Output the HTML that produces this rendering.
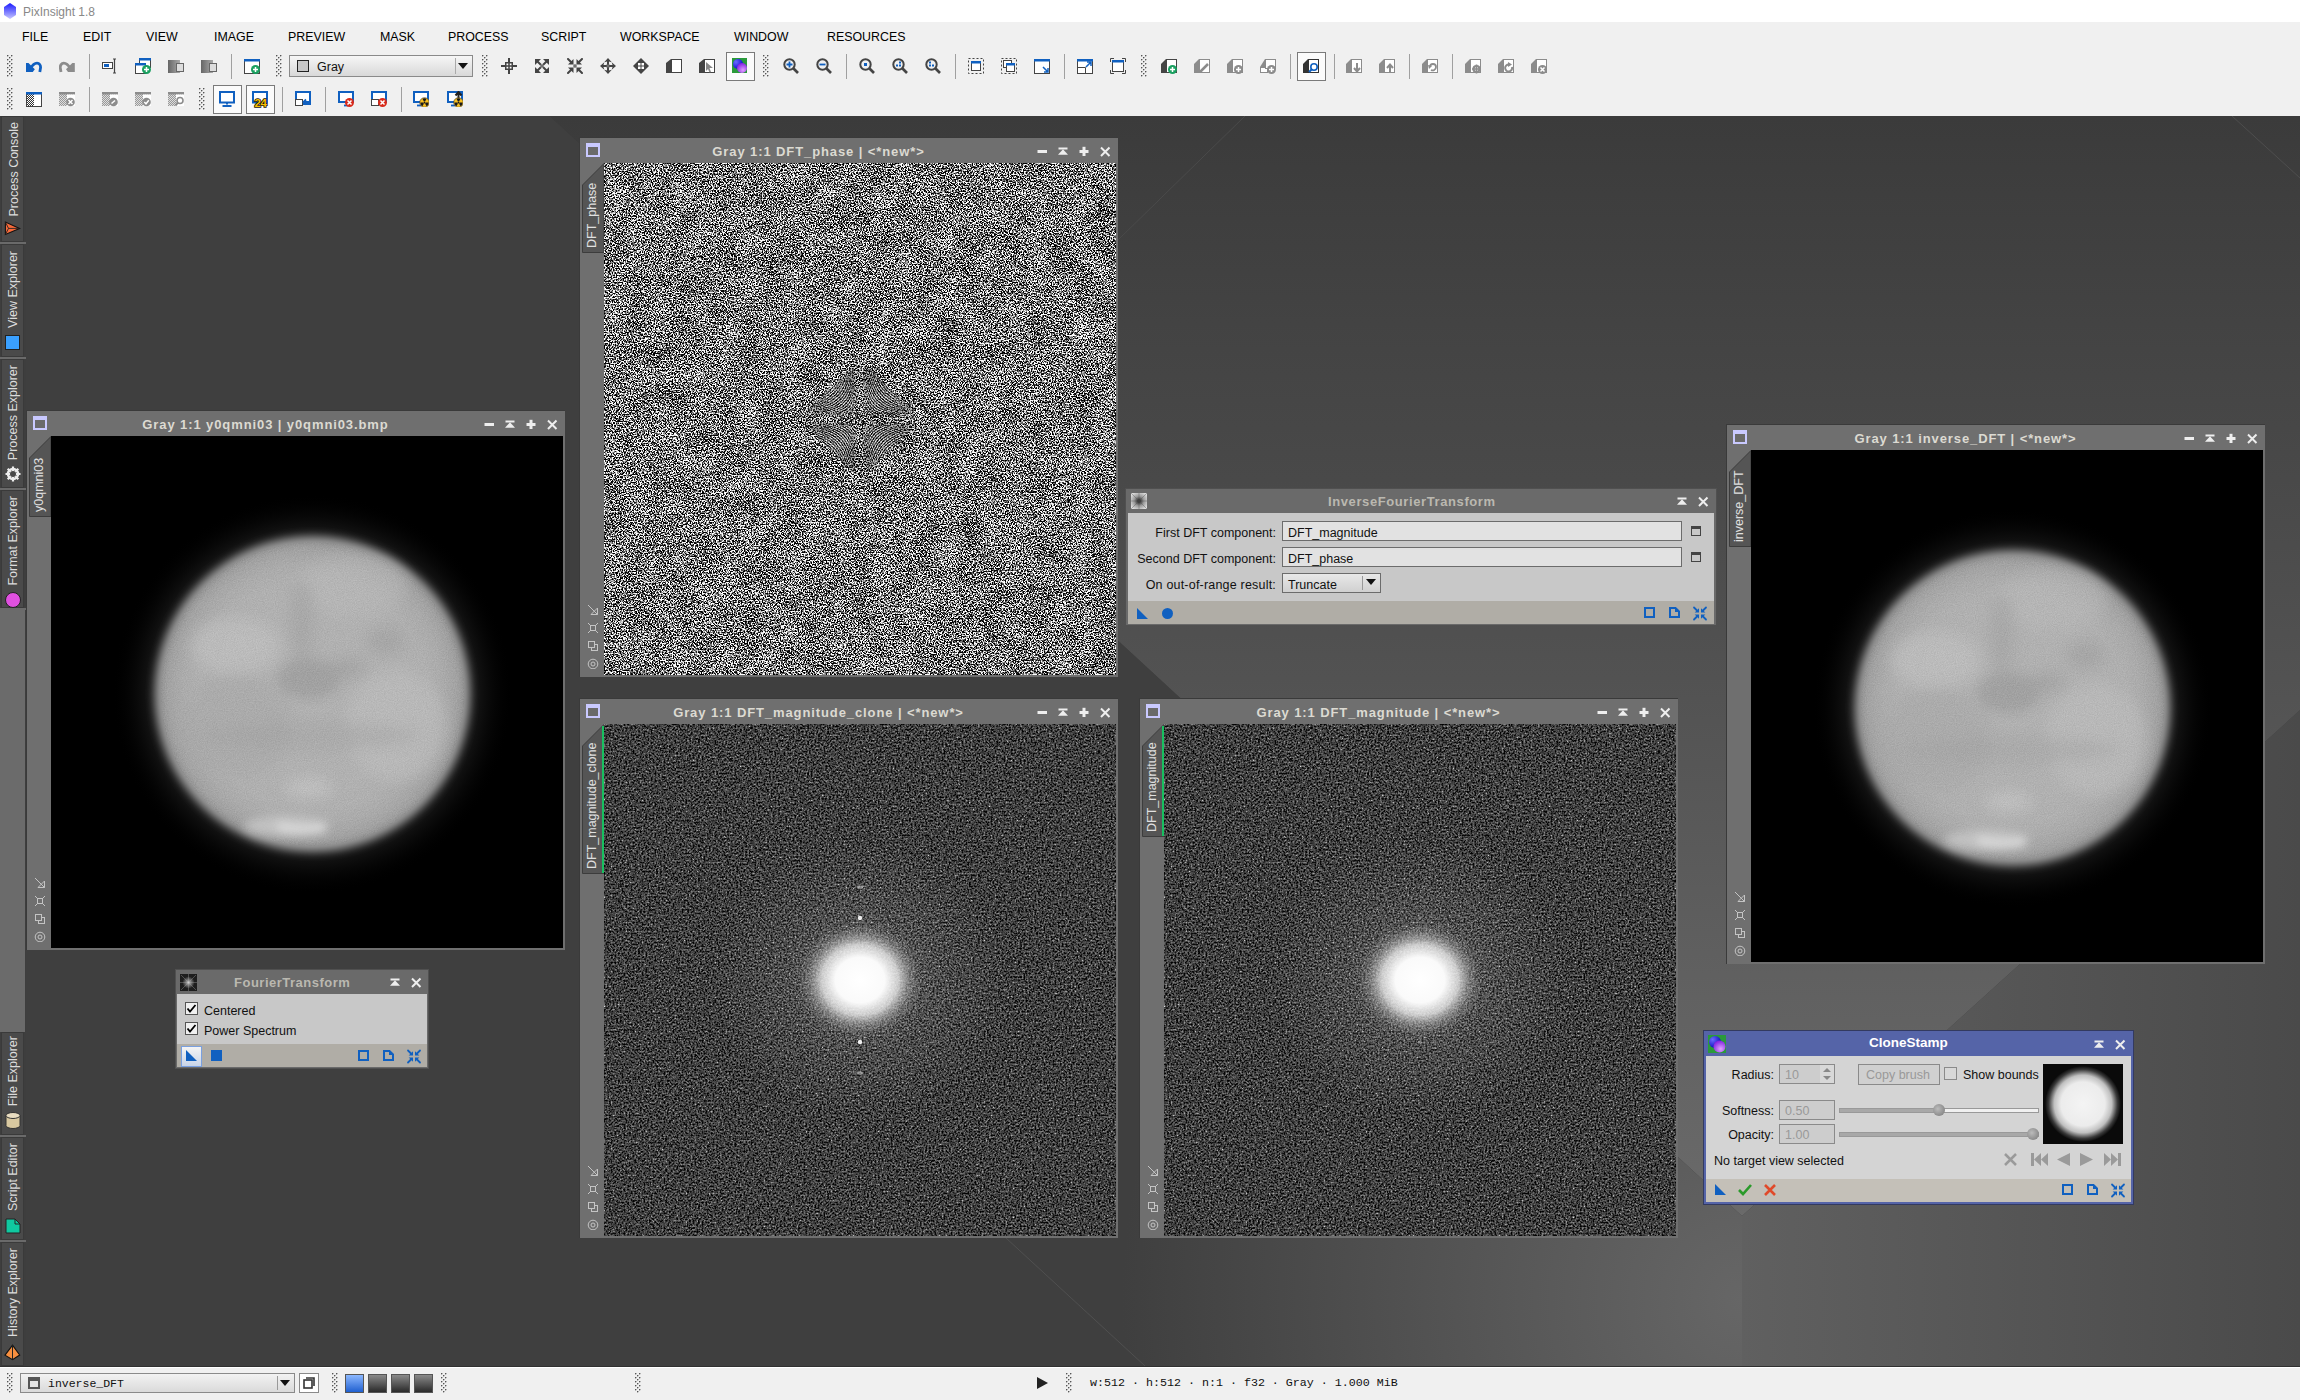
<!DOCTYPE html>
<html><head><meta charset="utf-8"><title>PixInsight</title>
<style>
*{box-sizing:border-box}
html,body{margin:0;padding:0}
body{width:2300px;height:1400px;position:relative;overflow:hidden;font-family:"Liberation Sans", sans-serif;background:#3e3e3e}
.a{position:absolute}
.t{position:absolute;white-space:pre;line-height:1}
.b{font-weight:bold}
</style></head><body>
<div class="a" style="left:0;top:0;width:2300px;height:22px;background:#fff"></div>
<svg class="a" style="left:3px;top:3px" width="14" height="16" viewBox="0 0 14 16">
<defs><linearGradient id="lg0" x1="0" y1="0" x2="0" y2="1"><stop offset="0" stop-color="#1a1aff"/><stop offset="1" stop-color="#c8c8ff"/></linearGradient></defs>
<polygon points="7,0 13,4 13,12 7,16 1,12 1,4" fill="url(#lg0)"/></svg>
<div class="t" style="left:23px;top:6px;font-size:12px;color:#888">PixInsight 1.8</div>
<div class="a" style="left:0;top:22px;width:2300px;height:94px;background:#f0f0f0"></div><div class="t" style="left:22px;top:31px;font-size:12.4px;color:#000">FILE</div><div class="t" style="left:83px;top:31px;font-size:12.4px;color:#000">EDIT</div><div class="t" style="left:146px;top:31px;font-size:12.4px;color:#000">VIEW</div><div class="t" style="left:214px;top:31px;font-size:12.4px;color:#000">IMAGE</div><div class="t" style="left:288px;top:31px;font-size:12.4px;color:#000">PREVIEW</div><div class="t" style="left:380px;top:31px;font-size:12.4px;color:#000">MASK</div><div class="t" style="left:448px;top:31px;font-size:12.4px;color:#000">PROCESS</div><div class="t" style="left:541px;top:31px;font-size:12.4px;color:#000">SCRIPT</div><div class="t" style="left:620px;top:31px;font-size:12.4px;color:#000">WORKSPACE</div><div class="t" style="left:734px;top:31px;font-size:12.4px;color:#000">WINDOW</div><div class="t" style="left:827px;top:31px;font-size:12.4px;color:#000">RESOURCES</div><svg class="a" style="left:0;top:116px" width="2300" height="1250" viewBox="0 116 2300 1250">
<defs>
<linearGradient id="bgU" x1="0" y1="116" x2="0" y2="1216" gradientUnits="userSpaceOnUse">
<stop offset="0" stop-color="#3b3b3b"/><stop offset="0.33" stop-color="#494949"/><stop offset="0.55" stop-color="#545454"/><stop offset="0.8" stop-color="#616161"/><stop offset="1" stop-color="#6a6a6a"/></linearGradient>
<radialGradient id="bgB" cx="1742" cy="1300" r="620" fx="1742" fy="1300" gradientUnits="userSpaceOnUse">
<stop offset="0" stop-color="#666666"/><stop offset="1" stop-color="#3f3f3f"/></radialGradient>
<linearGradient id="bgR" x1="1742" y1="0" x2="2300" y2="0" gradientUnits="userSpaceOnUse">
<stop offset="0" stop-color="#606060"/><stop offset="1" stop-color="#4a4a4a"/></linearGradient>
</defs>
<rect x="0" y="116" width="2300" height="1250" fill="#3f3f3f"/>
<polygon points="549,116 2300,116 2300,710 1742,1216" fill="url(#bgU)"/>
<polygon points="549,116 1742,1216 1742,1366 1145,1366 580,846 40,346" fill="url(#bgB)"/>
<polygon points="1742,1216 2300,710 2300,1366 1742,1366" fill="url(#bgR)"/>
<line x1="1245" y1="116" x2="1118" y2="240" stroke="#4a4a4a" stroke-width="1"/>
<line x1="2232" y1="116" x2="2300" y2="178" stroke="#4e4e4e" stroke-width="1"/>
<line x1="1006" y1="1238" x2="1145" y2="1366" stroke="#505050" stroke-width="1"/>
</svg>
<svg width="0" height="0" style="position:absolute">
<defs>
<filter id="fphase" x="0" y="0" width="512" height="512" filterUnits="userSpaceOnUse" color-interpolation-filters="sRGB">
<feTurbulence type="fractalNoise" baseFrequency="0.72" numOctaves="2" seed="7" result="t1"/>
<feColorMatrix in="t1" type="matrix" values="1 0 0 0 0  1 0 0 0 0  1 0 0 0 0  0 0 0 0 1" result="n1"/>
<feTurbulence type="fractalNoise" baseFrequency="0.045" numOctaves="2" seed="3" result="t2"/>
<feColorMatrix in="t2" type="matrix" values="1 0 0 0 0  1 0 0 0 0  1 0 0 0 0  0 0 0 0 1" result="n2"/>
<feComposite in="n1" in2="n2" operator="arithmetic" k1="0" k2="1" k3="0.1" k4="-0.05"/>
<feComponentTransfer><feFuncR type="linear" slope="5" intercept="-2.05"/><feFuncG type="linear" slope="5" intercept="-2.05"/><feFuncB type="linear" slope="5" intercept="-2.05"/><feFuncA type="linear" slope="0" intercept="1"/></feComponentTransfer>
</filter>
<filter id="fmag" x="0" y="0" width="512" height="512" filterUnits="userSpaceOnUse" color-interpolation-filters="sRGB">
<feTurbulence type="fractalNoise" baseFrequency="0.55" numOctaves="3" seed="5"/>
<feColorMatrix type="matrix" values="1 0 0 0 0  1 0 0 0 0  1 0 0 0 0  0 0 0 0 1"/>
<feComponentTransfer><feFuncR type="table" tableValues="0 0 0 0.05 0.2 0.3 0.4 0.55 0.8 1"/><feFuncG type="table" tableValues="0 0 0 0.05 0.2 0.3 0.4 0.55 0.8 1"/><feFuncB type="table" tableValues="0 0 0 0.05 0.2 0.3 0.4 0.55 0.8 1"/></feComponentTransfer>
</filter>
<radialGradient id="gblob" cx="0.5" cy="0.5" r="0.5">
<stop offset="0" stop-color="#fff" stop-opacity="1"/><stop offset="0.4" stop-color="#fafafa" stop-opacity="1"/><stop offset="0.62" stop-color="#e8e8e8" stop-opacity="0.8"/><stop offset="0.82" stop-color="#b0b0b0" stop-opacity="0.35"/><stop offset="1" stop-color="#888" stop-opacity="0"/></radialGradient>
<radialGradient id="ghalo2" cx="0.5" cy="0.5" r="0.5">
<stop offset="0" stop-color="#fff" stop-opacity="0.25"/><stop offset="0.5" stop-color="#fff" stop-opacity="0.08"/><stop offset="1" stop-color="#fff" stop-opacity="0"/></radialGradient>
<filter id="fblur8" x="-20%" y="-20%" width="140%" height="140%"><feGaussianBlur stdDeviation="7"/></filter>
<filter id="fblur20" x="-50%" y="-50%" width="200%" height="200%"><feGaussianBlur stdDeviation="18"/></filter>
<filter id="fblur4" x="-50%" y="-50%" width="200%" height="200%"><feGaussianBlur stdDeviation="4"/></filter>
<radialGradient id="gplanet" cx="0.5" cy="0.5" r="0.5">
<stop offset="0" stop-color="#b8b8b8"/><stop offset="0.75" stop-color="#b6b6b6"/><stop offset="0.92" stop-color="#a8a8a8"/><stop offset="1" stop-color="#8a8a8a"/></radialGradient>
<radialGradient id="ghalo" cx="0.5" cy="0.5" r="0.5">
<stop offset="0.75" stop-color="#262626"/><stop offset="0.84" stop-color="#101010"/><stop offset="1" stop-color="#000" stop-opacity="0"/></radialGradient>
<filter id="fgrain" x="0" y="0" width="512" height="512" filterUnits="userSpaceOnUse" color-interpolation-filters="sRGB">
<feTurbulence type="fractalNoise" baseFrequency="0.9" numOctaves="2" seed="2"/>
<feColorMatrix type="matrix" values="1 0 0 0 0  1 0 0 0 0  1 0 0 0 0  0 0 0 0 1"/></filter>
<filter id="fpl" x="-20%" y="-20%" width="140%" height="140%"><feGaussianBlur stdDeviation="4"/></filter>
<filter id="fmk" x="-50%" y="-50%" width="200%" height="200%"><feGaussianBlur stdDeviation="7"/></filter>
<filter id="fcap" x="-50%" y="-50%" width="200%" height="200%"><feGaussianBlur stdDeviation="5"/></filter>
<clipPath id="cpl"><circle cx="261.5" cy="258" r="152"/></clipPath>
<radialGradient id="ghm" cx="256" cy="256" r="66" gradientUnits="userSpaceOnUse"><stop offset="0" stop-color="#fff"/><stop offset="0.5" stop-color="#fff"/><stop offset="1" stop-color="#000"/></radialGradient>
<filter id="fbm" x="-50%" y="-50%" width="200%" height="200%"><feGaussianBlur stdDeviation="3"/></filter><mask id="mhyper" maskUnits="userSpaceOnUse" x="0" y="0" width="512" height="512"><polygon points="256,196 318,256 256,316 194,256" fill="url(#ghm)"/><g filter="url(#fbm)"><rect x="250" y="190" width="12" height="132" fill="#000"/><rect x="190" y="250" width="132" height="12" fill="#000"/></g></mask>
<g id="hyper" mask="url(#mhyper)" opacity="0.75"><path d="M256.5,267.9 L256.7,264.4 L257.0,261.9 L257.4,260.1 L258.1,258.9 L258.9,258.0 L260.2,257.4 L261.9,257.0 L264.4,256.7 L268.0,256.5 L273.1,256.3 L280.3,256.2 L290.6,256.2 L305.2,256.1 L326.0,256.1 M255.5,267.9 L255.3,264.4 L255.0,261.9 L254.6,260.1 L253.9,258.9 L253.1,258.0 L251.8,257.4 L250.1,257.0 L247.6,256.7 L244.0,256.5 L238.9,256.3 L231.7,256.2 L221.4,256.2 L206.8,256.1 L186.0,256.1 M256.5,244.1 L256.7,247.6 L257.0,250.1 L257.4,251.9 L258.1,253.1 L258.9,254.0 L260.2,254.6 L261.9,255.0 L264.4,255.3 L268.0,255.5 L273.1,255.7 L280.3,255.8 L290.6,255.8 L305.2,255.9 L326.0,255.9 M255.5,244.1 L255.3,247.6 L255.0,250.1 L254.6,251.9 L253.9,253.1 L253.1,254.0 L251.8,254.6 L250.1,255.0 L247.6,255.3 L244.0,255.5 L238.9,255.7 L231.7,255.8 L221.4,255.8 L206.8,255.9 L186.0,255.9 M256.5,289.1 L256.7,279.2 L257.0,272.3 L257.4,267.5 L258.1,264.1 L258.9,261.7 L260.2,260.0 L261.9,258.8 L264.4,258.0 L268.0,257.4 L273.1,257.0 L280.3,256.7 L290.6,256.5 L305.2,256.3 L326.0,256.2 M255.5,289.1 L255.3,279.2 L255.0,272.3 L254.6,267.5 L253.9,264.1 L253.1,261.7 L251.8,260.0 L250.1,258.8 L247.6,258.0 L244.0,257.4 L238.9,257.0 L231.7,256.7 L221.4,256.5 L206.8,256.3 L186.0,256.2 M256.5,222.9 L256.7,232.8 L257.0,239.7 L257.4,244.5 L258.1,247.9 L258.9,250.3 L260.2,252.0 L261.9,253.2 L264.4,254.0 L268.0,254.6 L273.1,255.0 L280.3,255.3 L290.6,255.5 L305.2,255.7 L326.0,255.8 M255.5,222.9 L255.3,232.8 L255.0,239.7 L254.6,244.5 L253.9,247.9 L253.1,250.3 L251.8,252.0 L250.1,253.2 L247.6,254.0 L244.0,254.6 L238.9,255.0 L231.7,255.3 L221.4,255.5 L206.8,255.7 L186.0,255.8 M256.5,320.8 L256.7,301.5 L257.0,288.0 L257.4,278.5 L258.1,271.8 L258.9,267.1 L260.2,263.8 L261.9,261.5 L264.4,259.8 L268.0,258.7 L273.1,257.9 L280.3,257.3 L290.6,256.9 L305.2,256.7 L326.0,256.5 M255.5,320.8 L255.3,301.5 L255.0,288.0 L254.6,278.5 L253.9,271.8 L253.1,267.1 L251.8,263.8 L250.1,261.5 L247.6,259.8 L244.0,258.7 L238.9,257.9 L231.7,257.3 L221.4,256.9 L206.8,256.7 L186.0,256.5 M256.5,191.2 L256.7,210.5 L257.0,224.0 L257.4,233.5 L258.1,240.2 L258.9,244.9 L260.2,248.2 L261.9,250.5 L264.4,252.2 L268.0,253.3 L273.1,254.1 L280.3,254.7 L290.6,255.1 L305.2,255.3 L326.0,255.5 M255.5,191.2 L255.3,210.5 L255.0,224.0 L254.6,233.5 L253.9,240.2 L253.1,244.9 L251.8,248.2 L250.1,250.5 L247.6,252.2 L244.0,253.3 L238.9,254.1 L231.7,254.7 L221.4,255.1 L206.8,255.3 L186.0,255.5 M256.8,326.0 L257.1,306.7 L257.5,292.7 L258.0,282.6 L258.8,275.3 L259.8,270.0 L261.3,266.1 L263.3,263.3 L266.1,261.3 L270.0,259.8 L275.3,258.8 L282.6,258.0 L292.7,257.5 L306.7,257.1 L326.0,256.8 M255.2,326.0 L254.9,306.7 L254.5,292.7 L254.0,282.6 L253.2,275.3 L252.2,270.0 L250.7,266.1 L248.7,263.3 L245.9,261.3 L242.0,259.8 L236.7,258.8 L229.4,258.0 L219.3,257.5 L205.3,257.1 L186.0,256.8 M256.8,186.0 L257.1,205.3 L257.5,219.3 L258.0,229.4 L258.8,236.7 L259.8,242.0 L261.3,245.9 L263.3,248.7 L266.1,250.7 L270.0,252.2 L275.3,253.2 L282.6,254.0 L292.7,254.5 L306.7,254.9 L326.0,255.2 M255.2,186.0 L254.9,205.3 L254.5,219.3 L254.0,229.4 L253.2,236.7 L252.2,242.0 L250.7,245.9 L248.7,248.7 L245.9,250.7 L242.0,252.2 L236.7,253.2 L229.4,254.0 L219.3,254.5 L205.3,254.9 L186.0,255.2 M257.1,326.0 L257.5,308.2 L258.1,294.9 L258.8,285.0 L259.7,277.6 L261.0,272.1 L262.7,268.0 L264.9,264.9 L268.0,262.7 L272.1,261.0 L277.6,259.7 L285.0,258.8 L294.9,258.1 L308.2,257.5 L326.0,257.1 M254.9,326.0 L254.5,308.2 L253.9,294.9 L253.2,285.0 L252.3,277.6 L251.0,272.1 L249.3,268.0 L247.1,264.9 L244.0,262.7 L239.9,261.0 L234.4,259.7 L227.0,258.8 L217.1,258.1 L203.8,257.5 L186.0,257.1 M257.1,186.0 L257.5,203.8 L258.1,217.1 L258.8,227.0 L259.7,234.4 L261.0,239.9 L262.7,244.0 L264.9,247.1 L268.0,249.3 L272.1,251.0 L277.6,252.3 L285.0,253.2 L294.9,253.9 L308.2,254.5 L326.0,254.9 M254.9,186.0 L254.5,203.8 L253.9,217.1 L253.2,227.0 L252.3,234.4 L251.0,239.9 L249.3,244.0 L247.1,247.1 L244.0,249.3 L239.9,251.0 L234.4,252.3 L227.0,253.2 L217.1,253.9 L203.8,254.5 L186.0,254.9 M257.6,326.0 L258.1,309.4 L258.7,296.8 L259.6,287.1 L260.7,279.8 L262.2,274.1 L264.1,269.8 L266.6,266.6 L269.8,264.1 L274.1,262.2 L279.8,260.7 L287.1,259.6 L296.8,258.7 L309.4,258.1 L326.0,257.6 M254.4,326.0 L253.9,309.4 L253.3,296.8 L252.4,287.1 L251.3,279.8 L249.8,274.1 L247.9,269.8 L245.4,266.6 L242.2,264.1 L237.9,262.2 L232.2,260.7 L224.9,259.6 L215.2,258.7 L202.6,258.1 L186.0,257.6 M257.6,186.0 L258.1,202.6 L258.7,215.2 L259.6,224.9 L260.7,232.2 L262.2,237.9 L264.1,242.2 L266.6,245.4 L269.8,247.9 L274.1,249.8 L279.8,251.3 L287.1,252.4 L296.8,253.3 L309.4,253.9 L326.0,254.4 M254.4,186.0 L253.9,202.6 L253.3,215.2 L252.4,224.9 L251.3,232.2 L249.8,237.9 L247.9,242.2 L245.4,245.4 L242.2,247.9 L237.9,249.8 L232.2,251.3 L224.9,252.4 L215.2,253.3 L202.6,253.9 L186.0,254.4 M258.1,326.0 L258.7,310.5 L259.5,298.5 L260.5,289.1 L261.8,281.8 L263.4,276.1 L265.5,271.7 L268.2,268.2 L271.7,265.5 L276.1,263.4 L281.8,261.8 L289.1,260.5 L298.5,259.5 L310.5,258.7 L326.0,258.1 M253.9,326.0 L253.3,310.5 L252.5,298.5 L251.5,289.1 L250.2,281.8 L248.6,276.1 L246.5,271.7 L243.8,268.2 L240.3,265.5 L235.9,263.4 L230.2,261.8 L222.9,260.5 L213.5,259.5 L201.5,258.7 L186.0,258.1 M258.1,186.0 L258.7,201.5 L259.5,213.5 L260.5,222.9 L261.8,230.2 L263.4,235.9 L265.5,240.3 L268.2,243.8 L271.7,246.5 L276.1,248.6 L281.8,250.2 L289.1,251.5 L298.5,252.5 L310.5,253.3 L326.0,253.9 M253.9,186.0 L253.3,201.5 L252.5,213.5 L251.5,222.9 L250.2,230.2 L248.6,235.9 L246.5,240.3 L243.8,243.8 L240.3,246.5 L235.9,248.6 L230.2,250.2 L222.9,251.5 L213.5,252.5 L201.5,253.3 L186.0,253.9 M258.7,326.0 L259.4,311.5 L260.3,300.0 L261.5,290.9 L262.9,283.7 L264.7,278.0 L267.0,273.4 L269.8,269.8 L273.4,267.0 L278.0,264.7 L283.7,262.9 L290.9,261.5 L300.0,260.3 L311.5,259.4 L326.0,258.7 M253.3,326.0 L252.6,311.5 L251.7,300.0 L250.5,290.9 L249.1,283.7 L247.3,278.0 L245.0,273.4 L242.2,269.8 L238.6,267.0 L234.0,264.7 L228.3,262.9 L221.1,261.5 L212.0,260.3 L200.5,259.4 L186.0,258.7 M258.7,186.0 L259.4,200.5 L260.3,212.0 L261.5,221.1 L262.9,228.3 L264.7,234.0 L267.0,238.6 L269.8,242.2 L273.4,245.0 L278.0,247.3 L283.7,249.1 L290.9,250.5 L300.0,251.7 L311.5,252.6 L326.0,253.3 M253.3,186.0 L252.6,200.5 L251.7,212.0 L250.5,221.1 L249.1,228.3 L247.3,234.0 L245.0,238.6 L242.2,242.2 L238.6,245.0 L234.0,247.3 L228.3,249.1 L221.1,250.5 L212.0,251.7 L200.5,252.6 L186.0,253.3 M259.4,326.0 L260.2,312.4 L261.3,301.5 L262.5,292.6 L264.1,285.5 L266.0,279.8 L268.5,275.2 L271.5,271.5 L275.2,268.5 L279.8,266.0 L285.5,264.1 L292.6,262.5 L301.5,261.3 L312.4,260.2 L326.0,259.4 M252.6,326.0 L251.8,312.4 L250.7,301.5 L249.5,292.6 L247.9,285.5 L246.0,279.8 L243.5,275.2 L240.5,271.5 L236.8,268.5 L232.2,266.0 L226.5,264.1 L219.4,262.5 L210.5,261.3 L199.6,260.2 L186.0,259.4 M259.4,186.0 L260.2,199.6 L261.3,210.5 L262.5,219.4 L264.1,226.5 L266.0,232.2 L268.5,236.8 L271.5,240.5 L275.2,243.5 L279.8,246.0 L285.5,247.9 L292.6,249.5 L301.5,250.7 L312.4,251.8 L326.0,252.6 M252.6,186.0 L251.8,199.6 L250.7,210.5 L249.5,219.4 L247.9,226.5 L246.0,232.2 L243.5,236.8 L240.5,240.5 L236.8,243.5 L232.2,246.0 L226.5,247.9 L219.4,249.5 L210.5,250.7 L199.6,251.8 L186.0,252.6 M260.2,326.0 L261.1,313.2 L262.2,302.8 L263.6,294.2 L265.3,287.3 L267.4,281.6 L270.0,276.9 L273.1,273.1 L276.9,270.0 L281.6,267.4 L287.3,265.3 L294.2,263.6 L302.8,262.2 L313.2,261.1 L326.0,260.2 M251.8,326.0 L250.9,313.2 L249.8,302.8 L248.4,294.2 L246.7,287.3 L244.6,281.6 L242.0,276.9 L238.9,273.1 L235.1,270.0 L230.4,267.4 L224.7,265.3 L217.8,263.6 L209.2,262.2 L198.8,261.1 L186.0,260.2 M260.2,186.0 L261.1,198.8 L262.2,209.2 L263.6,217.8 L265.3,224.7 L267.4,230.4 L270.0,235.1 L273.1,238.9 L276.9,242.0 L281.6,244.6 L287.3,246.7 L294.2,248.4 L302.8,249.8 L313.2,250.9 L326.0,251.8 M251.8,186.0 L250.9,198.8 L249.8,209.2 L248.4,217.8 L246.7,224.7 L244.6,230.4 L242.0,235.1 L238.9,238.9 L235.1,242.0 L230.4,244.6 L224.7,246.7 L217.8,248.4 L209.2,249.8 L198.8,250.9 L186.0,251.8 M261.0,326.0 L262.0,314.0 L263.3,304.0 L264.8,295.8 L266.6,288.9 L268.8,283.3 L271.5,278.6 L274.7,274.7 L278.6,271.5 L283.3,268.8 L288.9,266.6 L295.8,264.8 L304.0,263.3 L314.0,262.0 L326.0,261.0 M251.0,326.0 L250.0,314.0 L248.7,304.0 L247.2,295.8 L245.4,288.9 L243.2,283.3 L240.5,278.6 L237.3,274.7 L233.4,271.5 L228.7,268.8 L223.1,266.6 L216.2,264.8 L208.0,263.3 L198.0,262.0 L186.0,261.0 M261.0,186.0 L262.0,198.0 L263.3,208.0 L264.8,216.2 L266.6,223.1 L268.8,228.7 L271.5,233.4 L274.7,237.3 L278.6,240.5 L283.3,243.2 L288.9,245.4 L295.8,247.2 L304.0,248.7 L314.0,250.0 L326.0,251.0 M251.0,186.0 L250.0,198.0 L248.7,208.0 L247.2,216.2 L245.4,223.1 L243.2,228.7 L240.5,233.4 L237.3,237.3 L233.4,240.5 L228.7,243.2 L223.1,245.4 L216.2,247.2 L208.0,248.7 L198.0,250.0 L186.0,251.0 M261.9,326.0 L263.0,314.7 L264.4,305.2 L266.0,297.2 L268.0,290.5 L270.3,284.9 L273.0,280.3 L276.3,276.3 L280.3,273.0 L284.9,270.3 L290.5,268.0 L297.2,266.0 L305.2,264.4 L314.7,263.0 L326.0,261.9 M250.1,326.0 L249.0,314.7 L247.6,305.2 L246.0,297.2 L244.0,290.5 L241.7,284.9 L239.0,280.3 L235.7,276.3 L231.7,273.0 L227.1,270.3 L221.5,268.0 L214.8,266.0 L206.8,264.4 L197.3,263.0 L186.0,261.9 M261.9,186.0 L263.0,197.3 L264.4,206.8 L266.0,214.8 L268.0,221.5 L270.3,227.1 L273.0,231.7 L276.3,235.7 L280.3,239.0 L284.9,241.7 L290.5,244.0 L297.2,246.0 L305.2,247.6 L314.7,249.0 L326.0,250.1 M250.1,186.0 L249.0,197.3 L247.6,206.8 L246.0,214.8 L244.0,221.5 L241.7,227.1 L239.0,231.7 L235.7,235.7 L231.7,239.0 L227.1,241.7 L221.5,244.0 L214.8,246.0 L206.8,247.6 L197.3,249.0 L186.0,250.1 M262.9,326.0 L264.1,315.3 L265.6,306.3 L267.3,298.6 L269.4,292.1 L271.8,286.6 L274.6,281.9 L278.0,278.0 L281.9,274.6 L286.6,271.8 L292.1,269.4 L298.6,267.3 L306.3,265.6 L315.3,264.1 L326.0,262.9 M249.1,326.0 L247.9,315.3 L246.4,306.3 L244.7,298.6 L242.6,292.1 L240.2,286.6 L237.4,281.9 L234.0,278.0 L230.1,274.6 L225.4,271.8 L219.9,269.4 L213.4,267.3 L205.7,265.6 L196.7,264.1 L186.0,262.9 M262.9,186.0 L264.1,196.7 L265.6,205.7 L267.3,213.4 L269.4,219.9 L271.8,225.4 L274.6,230.1 L278.0,234.0 L281.9,237.4 L286.6,240.2 L292.1,242.6 L298.6,244.7 L306.3,246.4 L315.3,247.9 L326.0,249.1 M249.1,186.0 L247.9,196.7 L246.4,205.7 L244.7,213.4 L242.6,219.9 L240.2,225.4 L237.4,230.1 L234.0,234.0 L230.1,237.4 L225.4,240.2 L219.9,242.6 L213.4,244.7 L205.7,246.4 L196.7,247.9 L186.0,249.1 M263.9,326.0 L265.3,315.9 L266.8,307.3 L268.7,299.9 L270.8,293.6 L273.3,288.2 L276.2,283.5 L279.6,279.6 L283.5,276.2 L288.2,273.3 L293.6,270.8 L299.9,268.7 L307.3,266.8 L315.9,265.3 L326.0,263.9 M248.1,326.0 L246.7,315.9 L245.2,307.3 L243.3,299.9 L241.2,293.6 L238.7,288.2 L235.8,283.5 L232.4,279.6 L228.5,276.2 L223.8,273.3 L218.4,270.8 L212.1,268.7 L204.7,266.8 L196.1,265.3 L186.0,263.9 M263.9,186.0 L265.3,196.1 L266.8,204.7 L268.7,212.1 L270.8,218.4 L273.3,223.8 L276.2,228.5 L279.6,232.4 L283.5,235.8 L288.2,238.7 L293.6,241.2 L299.9,243.3 L307.3,245.2 L315.9,246.7 L326.0,248.1 M248.1,186.0 L246.7,196.1 L245.2,204.7 L243.3,212.1 L241.2,218.4 L238.7,223.8 L235.8,228.5 L232.4,232.4 L228.5,235.8 L223.8,238.7 L218.4,241.2 L212.1,243.3 L204.7,245.2 L196.1,246.7 L186.0,248.1 M265.1,326.0 L266.5,316.5 L268.2,308.3 L270.1,301.2 L272.3,295.1 L274.8,289.8 L277.8,285.2 L281.2,281.2 L285.2,277.8 L289.8,274.8 L295.1,272.3 L301.2,270.1 L308.3,268.2 L316.5,266.5 L326.0,265.1 M246.9,326.0 L245.5,316.5 L243.8,308.3 L241.9,301.2 L239.7,295.1 L237.2,289.8 L234.2,285.2 L230.8,281.2 L226.8,277.8 L222.2,274.8 L216.9,272.3 L210.8,270.1 L203.7,268.2 L195.5,266.5 L186.0,265.1 M265.1,186.0 L266.5,195.5 L268.2,203.7 L270.1,210.8 L272.3,216.9 L274.8,222.2 L277.8,226.8 L281.2,230.8 L285.2,234.2 L289.8,237.2 L295.1,239.7 L301.2,241.9 L308.3,243.8 L316.5,245.5 L326.0,246.9 M246.9,186.0 L245.5,195.5 L243.8,203.7 L241.9,210.8 L239.7,216.9 L237.2,222.2 L234.2,226.8 L230.8,230.8 L226.8,234.2 L222.2,237.2 L216.9,239.7 L210.8,241.9 L203.7,243.8 L195.5,245.5 L186.0,246.9 M266.3,326.0 L267.8,317.0 L269.5,309.2 L271.5,302.4 L273.8,296.5 L276.4,291.3 L279.4,286.8 L282.8,282.8 L286.8,279.4 L291.3,276.4 L296.5,273.8 L302.4,271.5 L309.2,269.5 L317.0,267.8 L326.0,266.3 M245.7,326.0 L244.2,317.0 L242.5,309.2 L240.5,302.4 L238.2,296.5 L235.6,291.3 L232.6,286.8 L229.2,282.8 L225.2,279.4 L220.7,276.4 L215.5,273.8 L209.6,271.5 L202.8,269.5 L195.0,267.8 L186.0,266.3 M266.3,186.0 L267.8,195.0 L269.5,202.8 L271.5,209.6 L273.8,215.5 L276.4,220.7 L279.4,225.2 L282.8,229.2 L286.8,232.6 L291.3,235.6 L296.5,238.2 L302.4,240.5 L309.2,242.5 L317.0,244.2 L326.0,245.7 M245.7,186.0 L244.2,195.0 L242.5,202.8 L240.5,209.6 L238.2,215.5 L235.6,220.7 L232.6,225.2 L229.2,229.2 L225.2,232.6 L220.7,235.6 L215.5,238.2 L209.6,240.5 L202.8,242.5 L195.0,244.2 L186.0,245.7 M267.6,326.0 L269.2,317.6 L271.0,310.1 L273.0,303.6 L275.4,297.9 L278.0,292.8 L281.0,288.4 L284.5,284.5 L288.4,281.0 L292.8,278.0 L297.9,275.4 L303.6,273.0 L310.1,271.0 L317.6,269.2 L326.0,267.6 M244.4,326.0 L242.8,317.6 L241.0,310.1 L239.0,303.6 L236.6,297.9 L234.0,292.8 L231.0,288.4 L227.5,284.5 L223.6,281.0 L219.2,278.0 L214.1,275.4 L208.4,273.0 L201.9,271.0 L194.4,269.2 L186.0,267.6 M267.6,186.0 L269.2,194.4 L271.0,201.9 L273.0,208.4 L275.4,214.1 L278.0,219.2 L281.0,223.6 L284.5,227.5 L288.4,231.0 L292.8,234.0 L297.9,236.6 L303.6,239.0 L310.1,241.0 L317.6,242.8 L326.0,244.4 M244.4,186.0 L242.8,194.4 L241.0,201.9 L239.0,208.4 L236.6,214.1 L234.0,219.2 L231.0,223.6 L227.5,227.5 L223.6,231.0 L219.2,234.0 L214.1,236.6 L208.4,239.0 L201.9,241.0 L194.4,242.8 L186.0,244.4 M268.9,326.0 L270.6,318.0 L272.5,311.0 L274.6,304.7 L277.0,299.2 L279.6,294.3 L282.7,289.9 L286.1,286.1 L289.9,282.7 L294.3,279.6 L299.2,277.0 L304.7,274.6 L311.0,272.5 L318.0,270.6 L326.0,268.9 M243.1,326.0 L241.4,318.0 L239.5,311.0 L237.4,304.7 L235.0,299.2 L232.4,294.3 L229.3,289.9 L225.9,286.1 L222.1,282.7 L217.7,279.6 L212.8,277.0 L207.3,274.6 L201.0,272.5 L194.0,270.6 L186.0,268.9 M268.9,186.0 L270.6,194.0 L272.5,201.0 L274.6,207.3 L277.0,212.8 L279.6,217.7 L282.7,222.1 L286.1,225.9 L289.9,229.3 L294.3,232.4 L299.2,235.0 L304.7,237.4 L311.0,239.5 L318.0,241.4 L326.0,243.1 M243.1,186.0 L241.4,194.0 L239.5,201.0 L237.4,207.3 L235.0,212.8 L232.4,217.7 L229.3,222.1 L225.9,225.9 L222.1,229.3 L217.7,232.4 L212.8,235.0 L207.3,237.4 L201.0,239.5 L194.0,241.4 L186.0,243.1 M270.4,326.0 L272.1,318.5 L274.0,311.8 L276.2,305.9 L278.6,300.5 L281.3,295.8 L284.3,291.5 L287.7,287.7 L291.5,284.3 L295.8,281.3 L300.5,278.6 L305.9,276.2 L311.8,274.0 L318.5,272.1 L326.0,270.4 M241.6,326.0 L239.9,318.5 L238.0,311.8 L235.8,305.9 L233.4,300.5 L230.7,295.8 L227.7,291.5 L224.3,287.7 L220.5,284.3 L216.2,281.3 L211.5,278.6 L206.1,276.2 L200.2,274.0 L193.5,272.1 L186.0,270.4 M270.4,186.0 L272.1,193.5 L274.0,200.2 L276.2,206.1 L278.6,211.5 L281.3,216.2 L284.3,220.5 L287.7,224.3 L291.5,227.7 L295.8,230.7 L300.5,233.4 L305.9,235.8 L311.8,238.0 L318.5,239.9 L326.0,241.6 M241.6,186.0 L239.9,193.5 L238.0,200.2 L235.8,206.1 L233.4,211.5 L230.7,216.2 L227.7,220.5 L224.3,224.3 L220.5,227.7 L216.2,230.7 L211.5,233.4 L206.1,235.8 L200.2,238.0 L193.5,239.9 L186.0,241.6 M271.9,326.0 L273.7,319.0 L275.6,312.6 L277.8,306.9 L280.3,301.8 L283.0,297.2 L286.0,293.1 L289.3,289.3 L293.1,286.0 L297.2,283.0 L301.8,280.3 L306.9,277.8 L312.6,275.6 L319.0,273.7 L326.0,271.9 M240.1,326.0 L238.3,319.0 L236.4,312.6 L234.2,306.9 L231.7,301.8 L229.0,297.2 L226.0,293.1 L222.7,289.3 L218.9,286.0 L214.8,283.0 L210.2,280.3 L205.1,277.8 L199.4,275.6 L193.0,273.7 L186.0,271.9 M271.9,186.0 L273.7,193.0 L275.6,199.4 L277.8,205.1 L280.3,210.2 L283.0,214.8 L286.0,218.9 L289.3,222.7 L293.1,226.0 L297.2,229.0 L301.8,231.7 L306.9,234.2 L312.6,236.4 L319.0,238.3 L326.0,240.1 M240.1,186.0 L238.3,193.0 L236.4,199.4 L234.2,205.1 L231.7,210.2 L229.0,214.8 L226.0,218.9 L222.7,222.7 L218.9,226.0 L214.8,229.0 L210.2,231.7 L205.1,234.2 L199.4,236.4 L193.0,238.3 L186.0,240.1 M273.5,326.0 L275.3,319.4 L277.3,313.4 L279.5,308.0 L282.0,303.1 L284.7,298.6 L287.7,294.6 L291.0,291.0 L294.6,287.7 L298.6,284.7 L303.1,282.0 L308.0,279.5 L313.4,277.3 L319.4,275.3 L326.0,273.5 M238.5,326.0 L236.7,319.4 L234.7,313.4 L232.5,308.0 L230.0,303.1 L227.3,298.6 L224.3,294.6 L221.0,291.0 L217.4,287.7 L213.4,284.7 L208.9,282.0 L204.0,279.5 L198.6,277.3 L192.6,275.3 L186.0,273.5 M273.5,186.0 L275.3,192.6 L277.3,198.6 L279.5,204.0 L282.0,208.9 L284.7,213.4 L287.7,217.4 L291.0,221.0 L294.6,224.3 L298.6,227.3 L303.1,230.0 L308.0,232.5 L313.4,234.7 L319.4,236.7 L326.0,238.5 M238.5,186.0 L236.7,192.6 L234.7,198.6 L232.5,204.0 L230.0,208.9 L227.3,213.4 L224.3,217.4 L221.0,221.0 L217.4,224.3 L213.4,227.3 L208.9,230.0 L204.0,232.5 L198.6,234.7 L192.6,236.7 L186.0,238.5 M277.0,319.8 L279.0,314.2 L281.3,309.0 L283.7,304.3 L286.4,300.0 L289.4,296.1 L292.6,292.6 L296.1,289.4 L300.0,286.4 L304.3,283.7 L309.0,281.3 L314.2,279.0 L319.8,277.0 M235.0,319.8 L233.0,314.2 L230.7,309.0 L228.3,304.3 L225.6,300.0 L222.6,296.1 L219.4,292.6 L215.9,289.4 L212.0,286.4 L207.7,283.7 L203.0,281.3 L197.8,279.0 L192.2,277.0 M277.0,192.2 L279.0,197.8 L281.3,203.0 L283.7,207.7 L286.4,212.0 L289.4,215.9 L292.6,219.4 L296.1,222.6 L300.0,225.6 L304.3,228.3 L309.0,230.7 L314.2,233.0 L319.8,235.0 M235.0,192.2 L233.0,197.8 L230.7,203.0 L228.3,207.7 L225.6,212.0 L222.6,215.9 L219.4,219.4 L215.9,222.6 L212.0,225.6 L207.7,228.3 L203.0,230.7 L197.8,233.0 L192.2,235.0 M278.8,320.2 L280.8,314.9 L283.0,310.0 L285.5,305.5 L288.2,301.4 L291.1,297.7 L294.2,294.2 L297.7,291.1 L301.4,288.2 L305.5,285.5 L310.0,283.0 L314.9,280.8 L320.2,278.8 M233.2,320.2 L231.2,314.9 L229.0,310.0 L226.5,305.5 L223.8,301.4 L220.9,297.7 L217.8,294.2 L214.3,291.1 L210.6,288.2 L206.5,285.5 L202.0,283.0 L197.1,280.8 L191.8,278.8 M278.8,191.8 L280.8,197.1 L283.0,202.0 L285.5,206.5 L288.2,210.6 L291.1,214.3 L294.2,217.8 L297.7,220.9 L301.4,223.8 L305.5,226.5 L310.0,229.0 L314.9,231.2 L320.2,233.2 M233.2,191.8 L231.2,197.1 L229.0,202.0 L226.5,206.5 L223.8,210.6 L220.9,214.3 L217.8,217.8 L214.3,220.9 L210.6,223.8 L206.5,226.5 L202.0,229.0 L197.1,231.2 L191.8,233.2 M282.6,315.6 L284.9,311.0 L287.3,306.7 L289.9,302.8 L292.8,299.2 L295.8,295.8 L299.2,292.8 L302.8,289.9 L306.7,287.3 L311.0,284.9 L315.6,282.6 M229.4,315.6 L227.1,311.0 L224.7,306.7 L222.1,302.8 L219.2,299.2 L216.2,295.8 L212.8,292.8 L209.2,289.9 L205.3,287.3 L201.0,284.9 L196.4,282.6 M282.6,196.4 L284.9,201.0 L287.3,205.3 L289.9,209.2 L292.8,212.8 L295.8,216.2 L299.2,219.2 L302.8,222.1 L306.7,224.7 L311.0,227.1 L315.6,229.4 M229.4,196.4 L227.1,201.0 L224.7,205.3 L222.1,209.2 L219.2,212.8 L216.2,216.2 L212.8,219.2 L209.2,222.1 L205.3,224.7 L201.0,227.1 L196.4,229.4 M286.7,311.9 L289.1,307.9 L291.7,304.2 L294.5,300.7 L297.5,297.5 L300.7,294.5 L304.2,291.7 L307.9,289.1 L311.9,286.7 M225.3,311.9 L222.9,307.9 L220.3,304.2 L217.5,300.7 L214.5,297.5 L211.3,294.5 L207.8,291.7 L204.1,289.1 L200.1,286.7 M286.7,200.1 L289.1,204.1 L291.7,207.8 L294.5,211.3 L297.5,214.5 L300.7,217.5 L304.2,220.3 L307.9,222.9 L311.9,225.3 M225.3,200.1 L222.9,204.1 L220.3,207.8 L217.5,211.3 L214.5,214.5 L211.3,217.5 L207.8,220.3 L204.1,222.9 L200.1,225.3 M293.5,305.5 L296.2,302.2 L299.1,299.1 L302.2,296.2 L305.5,293.5 M218.5,305.5 L215.8,302.2 L212.9,299.1 L209.8,296.2 L206.5,293.5 M293.5,206.5 L296.2,209.8 L299.1,212.9 L302.2,215.8 L305.5,218.5 M218.5,206.5 L215.8,209.8 L212.9,212.9 L209.8,215.8 L206.5,218.5" fill="none" stroke="#fff" stroke-width="1.1"/><path d="M256.5,261.3 L256.7,259.7 L257.0,258.6 L257.4,257.8 L258.1,257.3 L258.9,256.9 L260.2,256.6 L261.9,256.4 L264.4,256.3 L268.0,256.2 L273.1,256.2 L280.3,256.1 L290.6,256.1 L305.2,256.1 L326.0,256.0 M255.5,261.3 L255.3,259.7 L255.0,258.6 L254.6,257.8 L253.9,257.3 L253.1,256.9 L251.8,256.6 L250.1,256.4 L247.6,256.3 L244.0,256.2 L238.9,256.2 L231.7,256.1 L221.4,256.1 L206.8,256.1 L186.0,256.0 M256.5,250.7 L256.7,252.3 L257.0,253.4 L257.4,254.2 L258.1,254.7 L258.9,255.1 L260.2,255.4 L261.9,255.6 L264.4,255.7 L268.0,255.8 L273.1,255.8 L280.3,255.9 L290.6,255.9 L305.2,255.9 L326.0,256.0 M255.5,250.7 L255.3,252.3 L255.0,253.4 L254.6,254.2 L253.9,254.7 L253.1,255.1 L251.8,255.4 L250.1,255.6 L247.6,255.7 L244.0,255.8 L238.9,255.8 L231.7,255.9 L221.4,255.9 L206.8,255.9 L186.0,256.0 M256.5,277.2 L256.7,270.9 L257.0,266.4 L257.4,263.3 L258.1,261.2 L258.9,259.6 L260.2,258.5 L261.9,257.8 L264.4,257.3 L268.0,256.9 L273.1,256.6 L280.3,256.4 L290.6,256.3 L305.2,256.2 L326.0,256.2 M255.5,277.2 L255.3,270.9 L255.0,266.4 L254.6,263.3 L253.9,261.2 L253.1,259.6 L251.8,258.5 L250.1,257.8 L247.6,257.3 L244.0,256.9 L238.9,256.6 L231.7,256.4 L221.4,256.3 L206.8,256.2 L186.0,256.2 M256.5,234.8 L256.7,241.1 L257.0,245.6 L257.4,248.7 L258.1,250.8 L258.9,252.4 L260.2,253.5 L261.9,254.2 L264.4,254.7 L268.0,255.1 L273.1,255.4 L280.3,255.6 L290.6,255.7 L305.2,255.8 L326.0,255.8 M255.5,234.8 L255.3,241.1 L255.0,245.6 L254.6,248.7 L253.9,250.8 L253.1,252.4 L251.8,253.5 L250.1,254.2 L247.6,254.7 L244.0,255.1 L238.9,255.4 L231.7,255.6 L221.4,255.7 L206.8,255.8 L186.0,255.8 M256.5,303.6 L256.7,289.5 L257.0,279.5 L257.4,272.5 L258.1,267.6 L258.9,264.2 L260.2,261.7 L261.9,260.0 L264.4,258.8 L268.0,258.0 L273.1,257.4 L280.3,257.0 L290.6,256.7 L305.2,256.5 L326.0,256.3 M255.5,303.6 L255.3,289.5 L255.0,279.5 L254.6,272.5 L253.9,267.6 L253.1,264.2 L251.8,261.7 L250.1,260.0 L247.6,258.8 L244.0,258.0 L238.9,257.4 L231.7,257.0 L221.4,256.7 L206.8,256.5 L186.0,256.3 M256.5,208.4 L256.7,222.5 L257.0,232.5 L257.4,239.5 L258.1,244.4 L258.9,247.8 L260.2,250.3 L261.9,252.0 L264.4,253.2 L268.0,254.0 L273.1,254.6 L280.3,255.0 L290.6,255.3 L305.2,255.5 L326.0,255.7 M255.5,208.4 L255.3,222.5 L255.0,232.5 L254.6,239.5 L253.9,244.4 L253.1,247.8 L251.8,250.3 L250.1,252.0 L247.6,253.2 L244.0,254.0 L238.9,254.6 L231.7,255.0 L221.4,255.3 L206.8,255.5 L186.0,255.7 M256.6,326.0 L256.8,305.9 L257.2,291.5 L257.7,281.3 L258.3,274.0 L259.3,268.8 L260.6,265.1 L262.5,262.5 L265.1,260.6 L268.8,259.3 L274.0,258.3 L281.3,257.7 L291.5,257.2 L305.9,256.8 L326.0,256.6 M255.4,326.0 L255.2,305.9 L254.8,291.5 L254.3,281.3 L253.7,274.0 L252.7,268.8 L251.4,265.1 L249.5,262.5 L246.9,260.6 L243.2,259.3 L238.0,258.3 L230.7,257.7 L220.5,257.2 L206.1,256.8 L186.0,256.6 M256.6,186.0 L256.8,206.1 L257.2,220.5 L257.7,230.7 L258.3,238.0 L259.3,243.2 L260.6,246.9 L262.5,249.5 L265.1,251.4 L268.8,252.7 L274.0,253.7 L281.3,254.3 L291.5,254.8 L305.9,255.2 L326.0,255.4 M255.4,186.0 L255.2,206.1 L254.8,220.5 L254.3,230.7 L253.7,238.0 L252.7,243.2 L251.4,246.9 L249.5,249.5 L246.9,251.4 L243.2,252.7 L238.0,253.7 L230.7,254.3 L220.5,254.8 L206.1,255.2 L186.0,255.4 M256.9,326.0 L257.3,307.5 L257.7,293.8 L258.4,283.8 L259.2,276.5 L260.4,271.0 L262.0,267.1 L264.1,264.1 L267.1,262.0 L271.0,260.4 L276.5,259.2 L283.8,258.4 L293.8,257.7 L307.5,257.3 L326.0,256.9 M255.1,326.0 L254.7,307.5 L254.3,293.8 L253.6,283.8 L252.8,276.5 L251.6,271.0 L250.0,267.1 L247.9,264.1 L244.9,262.0 L241.0,260.4 L235.5,259.2 L228.2,258.4 L218.2,257.7 L204.5,257.3 L186.0,256.9 M256.9,186.0 L257.3,204.5 L257.7,218.2 L258.4,228.2 L259.2,235.5 L260.4,241.0 L262.0,244.9 L264.1,247.9 L267.1,250.0 L271.0,251.6 L276.5,252.8 L283.8,253.6 L293.8,254.3 L307.5,254.7 L326.0,255.1 M255.1,186.0 L254.7,204.5 L254.3,218.2 L253.6,228.2 L252.8,235.5 L251.6,241.0 L250.0,244.9 L247.9,247.9 L244.9,250.0 L241.0,251.6 L235.5,252.8 L228.2,253.6 L218.2,254.3 L204.5,254.7 L186.0,255.1 M257.4,326.0 L257.8,308.8 L258.4,295.9 L259.2,286.1 L260.2,278.7 L261.6,273.1 L263.4,268.9 L265.8,265.8 L268.9,263.4 L273.1,261.6 L278.7,260.2 L286.1,259.2 L295.9,258.4 L308.8,257.8 L326.0,257.4 M254.6,326.0 L254.2,308.8 L253.6,295.9 L252.8,286.1 L251.8,278.7 L250.4,273.1 L248.6,268.9 L246.2,265.8 L243.1,263.4 L238.9,261.6 L233.3,260.2 L225.9,259.2 L216.1,258.4 L203.2,257.8 L186.0,257.4 M257.4,186.0 L257.8,203.2 L258.4,216.1 L259.2,225.9 L260.2,233.3 L261.6,238.9 L263.4,243.1 L265.8,246.2 L268.9,248.6 L273.1,250.4 L278.7,251.8 L286.1,252.8 L295.9,253.6 L308.8,254.2 L326.0,254.6 M254.6,186.0 L254.2,203.2 L253.6,216.1 L252.8,225.9 L251.8,233.3 L250.4,238.9 L248.6,243.1 L246.2,246.2 L243.1,248.6 L238.9,250.4 L233.3,251.8 L225.9,252.8 L216.1,253.6 L203.2,254.2 L186.0,254.6 M257.9,326.0 L258.4,310.0 L259.1,297.7 L260.0,288.1 L261.2,280.8 L262.8,275.1 L264.8,270.8 L267.4,267.4 L270.8,264.8 L275.1,262.8 L280.8,261.2 L288.1,260.0 L297.7,259.1 L310.0,258.4 L326.0,257.9 M254.1,326.0 L253.6,310.0 L252.9,297.7 L252.0,288.1 L250.8,280.8 L249.2,275.1 L247.2,270.8 L244.6,267.4 L241.2,264.8 L236.9,262.8 L231.2,261.2 L223.9,260.0 L214.3,259.1 L202.0,258.4 L186.0,257.9 M257.9,186.0 L258.4,202.0 L259.1,214.3 L260.0,223.9 L261.2,231.2 L262.8,236.9 L264.8,241.2 L267.4,244.6 L270.8,247.2 L275.1,249.2 L280.8,250.8 L288.1,252.0 L297.7,252.9 L310.0,253.6 L326.0,254.1 M254.1,186.0 L253.6,202.0 L252.9,214.3 L252.0,223.9 L250.8,231.2 L249.2,236.9 L247.2,241.2 L244.6,244.6 L241.2,247.2 L236.9,249.2 L231.2,250.8 L223.9,252.0 L214.3,252.9 L202.0,253.6 L186.0,254.1 M258.4,326.0 L259.1,311.0 L259.9,299.3 L261.0,290.0 L262.3,282.8 L264.0,277.0 L266.2,272.5 L269.0,269.0 L272.5,266.2 L277.0,264.0 L282.8,262.3 L290.0,261.0 L299.3,259.9 L311.0,259.1 L326.0,258.4 M253.6,326.0 L252.9,311.0 L252.1,299.3 L251.0,290.0 L249.7,282.8 L248.0,277.0 L245.8,272.5 L243.0,269.0 L239.5,266.2 L235.0,264.0 L229.2,262.3 L222.0,261.0 L212.7,259.9 L201.0,259.1 L186.0,258.4 M258.4,186.0 L259.1,201.0 L259.9,212.7 L261.0,222.0 L262.3,229.2 L264.0,235.0 L266.2,239.5 L269.0,243.0 L272.5,245.8 L277.0,248.0 L282.8,249.7 L290.0,251.0 L299.3,252.1 L311.0,252.9 L326.0,253.6 M253.6,186.0 L252.9,201.0 L252.1,212.7 L251.0,222.0 L249.7,229.2 L248.0,235.0 L245.8,239.5 L243.0,243.0 L239.5,245.8 L235.0,248.0 L229.2,249.7 L222.0,251.0 L212.7,252.1 L201.0,252.9 L186.0,253.6 M259.1,326.0 L259.8,312.0 L260.8,300.8 L262.0,291.8 L263.5,284.6 L265.4,278.9 L267.7,274.3 L270.6,270.6 L274.3,267.7 L278.9,265.4 L284.6,263.5 L291.8,262.0 L300.8,260.8 L312.0,259.8 L326.0,259.1 M252.9,326.0 L252.2,312.0 L251.2,300.8 L250.0,291.8 L248.5,284.6 L246.6,278.9 L244.3,274.3 L241.4,270.6 L237.7,267.7 L233.1,265.4 L227.4,263.5 L220.2,262.0 L211.2,260.8 L200.0,259.8 L186.0,259.1 M259.1,186.0 L259.8,200.0 L260.8,211.2 L262.0,220.2 L263.5,227.4 L265.4,233.1 L267.7,237.7 L270.6,241.4 L274.3,244.3 L278.9,246.6 L284.6,248.5 L291.8,250.0 L300.8,251.2 L312.0,252.2 L326.0,252.9 M252.9,186.0 L252.2,200.0 L251.2,211.2 L250.0,220.2 L248.5,227.4 L246.6,233.1 L244.3,237.7 L241.4,241.4 L237.7,244.3 L233.1,246.6 L227.4,248.5 L220.2,250.0 L211.2,251.2 L200.0,252.2 L186.0,252.9 M259.8,326.0 L260.7,312.8 L261.7,302.1 L263.1,293.4 L264.7,286.4 L266.7,280.7 L269.2,276.0 L272.3,272.3 L276.0,269.2 L280.7,266.7 L286.4,264.7 L293.4,263.1 L302.1,261.7 L312.8,260.7 L326.0,259.8 M252.2,326.0 L251.3,312.8 L250.3,302.1 L248.9,293.4 L247.3,286.4 L245.3,280.7 L242.8,276.0 L239.7,272.3 L236.0,269.2 L231.3,266.7 L225.6,264.7 L218.6,263.1 L209.9,261.7 L199.2,260.7 L186.0,259.8 M259.8,186.0 L260.7,199.2 L261.7,209.9 L263.1,218.6 L264.7,225.6 L266.7,231.3 L269.2,236.0 L272.3,239.7 L276.0,242.8 L280.7,245.3 L286.4,247.3 L293.4,248.9 L302.1,250.3 L312.8,251.3 L326.0,252.2 M252.2,186.0 L251.3,199.2 L250.3,209.9 L248.9,218.6 L247.3,225.6 L245.3,231.3 L242.8,236.0 L239.7,239.7 L236.0,242.8 L231.3,245.3 L225.6,247.3 L218.6,248.9 L209.9,250.3 L199.2,251.3 L186.0,252.2 M260.6,326.0 L261.6,313.6 L262.8,303.4 L264.2,295.0 L266.0,288.1 L268.1,282.4 L270.7,277.7 L273.9,273.9 L277.7,270.7 L282.4,268.1 L288.1,266.0 L295.0,264.2 L303.4,262.8 L313.6,261.6 L326.0,260.6 M251.4,326.0 L250.4,313.6 L249.2,303.4 L247.8,295.0 L246.0,288.1 L243.9,282.4 L241.3,277.7 L238.1,273.9 L234.3,270.7 L229.6,268.1 L223.9,266.0 L217.0,264.2 L208.6,262.8 L198.4,261.6 L186.0,260.6 M260.6,186.0 L261.6,198.4 L262.8,208.6 L264.2,217.0 L266.0,223.9 L268.1,229.6 L270.7,234.3 L273.9,238.1 L277.7,241.3 L282.4,243.9 L288.1,246.0 L295.0,247.8 L303.4,249.2 L313.6,250.4 L326.0,251.4 M251.4,186.0 L250.4,198.4 L249.2,208.6 L247.8,217.0 L246.0,223.9 L243.9,229.6 L241.3,234.3 L238.1,238.1 L234.3,241.3 L229.6,243.9 L223.9,246.0 L217.0,247.8 L208.6,249.2 L198.4,250.4 L186.0,251.4 M261.4,326.0 L262.5,314.3 L263.8,304.6 L265.4,296.5 L267.3,289.7 L269.5,284.1 L272.3,279.4 L275.5,275.5 L279.4,272.3 L284.1,269.5 L289.7,267.3 L296.5,265.4 L304.6,263.8 L314.3,262.5 L326.0,261.4 M250.6,326.0 L249.5,314.3 L248.2,304.6 L246.6,296.5 L244.7,289.7 L242.5,284.1 L239.7,279.4 L236.5,275.5 L232.6,272.3 L227.9,269.5 L222.3,267.3 L215.5,265.4 L207.4,263.8 L197.7,262.5 L186.0,261.4 M261.4,186.0 L262.5,197.7 L263.8,207.4 L265.4,215.5 L267.3,222.3 L269.5,227.9 L272.3,232.6 L275.5,236.5 L279.4,239.7 L284.1,242.5 L289.7,244.7 L296.5,246.6 L304.6,248.2 L314.3,249.5 L326.0,250.6 M250.6,186.0 L249.5,197.7 L248.2,207.4 L246.6,215.5 L244.7,222.3 L242.5,227.9 L239.7,232.6 L236.5,236.5 L232.6,239.7 L227.9,242.5 L222.3,244.7 L215.5,246.6 L207.4,248.2 L197.7,249.5 L186.0,250.6 M262.4,326.0 L263.6,315.0 L265.0,305.7 L266.7,297.9 L268.7,291.3 L271.0,285.8 L273.8,281.1 L277.1,277.1 L281.1,273.8 L285.8,271.0 L291.3,268.7 L297.9,266.7 L305.7,265.0 L315.0,263.6 L326.0,262.4 M249.6,326.0 L248.4,315.0 L247.0,305.7 L245.3,297.9 L243.3,291.3 L241.0,285.8 L238.2,281.1 L234.9,277.1 L230.9,273.8 L226.2,271.0 L220.7,268.7 L214.1,266.7 L206.3,265.0 L197.0,263.6 L186.0,262.4 M262.4,186.0 L263.6,197.0 L265.0,206.3 L266.7,214.1 L268.7,220.7 L271.0,226.2 L273.8,230.9 L277.1,234.9 L281.1,238.2 L285.8,241.0 L291.3,243.3 L297.9,245.3 L305.7,247.0 L315.0,248.4 L326.0,249.6 M249.6,186.0 L248.4,197.0 L247.0,206.3 L245.3,214.1 L243.3,220.7 L241.0,226.2 L238.2,230.9 L234.9,234.9 L230.9,238.2 L226.2,241.0 L220.7,243.3 L214.1,245.3 L206.3,247.0 L197.0,248.4 L186.0,249.6 M263.4,326.0 L264.7,315.6 L266.2,306.8 L268.0,299.3 L270.1,292.8 L272.5,287.4 L275.4,282.7 L278.8,278.8 L282.7,275.4 L287.4,272.5 L292.8,270.1 L299.3,268.0 L306.8,266.2 L315.6,264.7 L326.0,263.4 M248.6,326.0 L247.3,315.6 L245.8,306.8 L244.0,299.3 L241.9,292.8 L239.5,287.4 L236.6,282.7 L233.2,278.8 L229.3,275.4 L224.6,272.5 L219.2,270.1 L212.7,268.0 L205.2,266.2 L196.4,264.7 L186.0,263.4 M263.4,186.0 L264.7,196.4 L266.2,205.2 L268.0,212.7 L270.1,219.2 L272.5,224.6 L275.4,229.3 L278.8,233.2 L282.7,236.6 L287.4,239.5 L292.8,241.9 L299.3,244.0 L306.8,245.8 L315.6,247.3 L326.0,248.6 M248.6,186.0 L247.3,196.4 L245.8,205.2 L244.0,212.7 L241.9,219.2 L239.5,224.6 L236.6,229.3 L233.2,233.2 L229.3,236.6 L224.6,239.5 L219.2,241.9 L212.7,244.0 L205.2,245.8 L196.4,247.3 L186.0,248.6 M264.5,326.0 L265.9,316.2 L267.5,307.8 L269.4,300.6 L271.5,294.3 L274.1,289.0 L277.0,284.4 L280.4,280.4 L284.4,277.0 L289.0,274.1 L294.3,271.5 L300.6,269.4 L307.8,267.5 L316.2,265.9 L326.0,264.5 M247.5,326.0 L246.1,316.2 L244.5,307.8 L242.6,300.6 L240.5,294.3 L237.9,289.0 L235.0,284.4 L231.6,280.4 L227.6,277.0 L223.0,274.1 L217.7,271.5 L211.4,269.4 L204.2,267.5 L195.8,265.9 L186.0,264.5 M264.5,186.0 L265.9,195.8 L267.5,204.2 L269.4,211.4 L271.5,217.7 L274.1,223.0 L277.0,227.6 L280.4,231.6 L284.4,235.0 L289.0,237.9 L294.3,240.5 L300.6,242.6 L307.8,244.5 L316.2,246.1 L326.0,247.5 M247.5,186.0 L246.1,195.8 L244.5,204.2 L242.6,211.4 L240.5,217.7 L237.9,223.0 L235.0,227.6 L231.6,231.6 L227.6,235.0 L223.0,237.9 L217.7,240.5 L211.4,242.6 L204.2,244.5 L195.8,246.1 L186.0,247.5 M265.7,326.0 L267.1,316.8 L268.8,308.8 L270.8,301.8 L273.0,295.8 L275.6,290.5 L278.6,286.0 L282.0,282.0 L286.0,278.6 L290.5,275.6 L295.8,273.0 L301.8,270.8 L308.8,268.8 L316.8,267.1 L326.0,265.7 M246.3,326.0 L244.9,316.8 L243.2,308.8 L241.2,301.8 L239.0,295.8 L236.4,290.5 L233.4,286.0 L230.0,282.0 L226.0,278.6 L221.5,275.6 L216.2,273.0 L210.2,270.8 L203.2,268.8 L195.2,267.1 L186.0,265.7 M265.7,186.0 L267.1,195.2 L268.8,203.2 L270.8,210.2 L273.0,216.2 L275.6,221.5 L278.6,226.0 L282.0,230.0 L286.0,233.4 L290.5,236.4 L295.8,239.0 L301.8,241.2 L308.8,243.2 L316.8,244.9 L326.0,246.3 M246.3,186.0 L244.9,195.2 L243.2,203.2 L241.2,210.2 L239.0,216.2 L236.4,221.5 L233.4,226.0 L230.0,230.0 L226.0,233.4 L221.5,236.4 L216.2,239.0 L210.2,241.2 L203.2,243.2 L195.2,244.9 L186.0,246.3 M266.9,326.0 L268.5,317.3 L270.2,309.7 L272.3,303.0 L274.6,297.2 L277.2,292.1 L280.2,287.6 L283.6,283.6 L287.6,280.2 L292.1,277.2 L297.2,274.6 L303.0,272.3 L309.7,270.2 L317.3,268.5 L326.0,266.9 M245.1,326.0 L243.5,317.3 L241.8,309.7 L239.7,303.0 L237.4,297.2 L234.8,292.1 L231.8,287.6 L228.4,283.6 L224.4,280.2 L219.9,277.2 L214.8,274.6 L209.0,272.3 L202.3,270.2 L194.7,268.5 L186.0,266.9 M266.9,186.0 L268.5,194.7 L270.2,202.3 L272.3,209.0 L274.6,214.8 L277.2,219.9 L280.2,224.4 L283.6,228.4 L287.6,231.8 L292.1,234.8 L297.2,237.4 L303.0,239.7 L309.7,241.8 L317.3,243.5 L326.0,245.1 M245.1,186.0 L243.5,194.7 L241.8,202.3 L239.7,209.0 L237.4,214.8 L234.8,219.9 L231.8,224.4 L228.4,228.4 L224.4,231.8 L219.9,234.8 L214.8,237.4 L209.0,239.7 L202.3,241.8 L194.7,243.5 L186.0,245.1 M268.2,326.0 L269.9,317.8 L271.7,310.6 L273.8,304.2 L276.1,298.5 L278.8,293.6 L281.8,289.2 L285.3,285.3 L289.2,281.8 L293.6,278.8 L298.5,276.1 L304.2,273.8 L310.6,271.7 L317.8,269.9 L326.0,268.2 M243.8,326.0 L242.1,317.8 L240.3,310.6 L238.2,304.2 L235.9,298.5 L233.2,293.6 L230.2,289.2 L226.7,285.3 L222.8,281.8 L218.4,278.8 L213.5,276.1 L207.8,273.8 L201.4,271.7 L194.2,269.9 L186.0,268.2 M268.2,186.0 L269.9,194.2 L271.7,201.4 L273.8,207.8 L276.1,213.5 L278.8,218.4 L281.8,222.8 L285.3,226.7 L289.2,230.2 L293.6,233.2 L298.5,235.9 L304.2,238.2 L310.6,240.3 L317.8,242.1 L326.0,243.8 M243.8,186.0 L242.1,194.2 L240.3,201.4 L238.2,207.8 L235.9,213.5 L233.2,218.4 L230.2,222.8 L226.7,226.7 L222.8,230.2 L218.4,233.2 L213.5,235.9 L207.8,238.2 L201.4,240.3 L194.2,242.1 L186.0,243.8 M269.6,326.0 L271.3,318.3 L273.2,311.4 L275.4,305.3 L277.8,299.9 L280.5,295.0 L283.5,290.7 L286.9,286.9 L290.7,283.5 L295.0,280.5 L299.9,277.8 L305.3,275.4 L311.4,273.2 L318.3,271.3 L326.0,269.6 M242.4,326.0 L240.7,318.3 L238.8,311.4 L236.6,305.3 L234.2,299.9 L231.5,295.0 L228.5,290.7 L225.1,286.9 L221.3,283.5 L217.0,280.5 L212.1,277.8 L206.7,275.4 L200.6,273.2 L193.7,271.3 L186.0,269.6 M269.6,186.0 L271.3,193.7 L273.2,200.6 L275.4,206.7 L277.8,212.1 L280.5,217.0 L283.5,221.3 L286.9,225.1 L290.7,228.5 L295.0,231.5 L299.9,234.2 L305.3,236.6 L311.4,238.8 L318.3,240.7 L326.0,242.4 M242.4,186.0 L240.7,193.7 L238.8,200.6 L236.6,206.7 L234.2,212.1 L231.5,217.0 L228.5,221.3 L225.1,225.1 L221.3,228.5 L217.0,231.5 L212.1,234.2 L206.7,236.6 L200.6,238.8 L193.7,240.7 L186.0,242.4 M271.1,326.0 L272.9,318.7 L274.8,312.2 L277.0,306.4 L279.4,301.2 L282.1,296.5 L285.2,292.3 L288.5,288.5 L292.3,285.2 L296.5,282.1 L301.2,279.4 L306.4,277.0 L312.2,274.8 L318.7,272.9 L326.0,271.1 M240.9,326.0 L239.1,318.7 L237.2,312.2 L235.0,306.4 L232.6,301.2 L229.9,296.5 L226.8,292.3 L223.5,288.5 L219.7,285.2 L215.5,282.1 L210.8,279.4 L205.6,277.0 L199.8,274.8 L193.3,272.9 L186.0,271.1 M271.1,186.0 L272.9,193.3 L274.8,199.8 L277.0,205.6 L279.4,210.8 L282.1,215.5 L285.2,219.7 L288.5,223.5 L292.3,226.8 L296.5,229.9 L301.2,232.6 L306.4,235.0 L312.2,237.2 L318.7,239.1 L326.0,240.9 M240.9,186.0 L239.1,193.3 L237.2,199.8 L235.0,205.6 L232.6,210.8 L229.9,215.5 L226.8,219.7 L223.5,223.5 L219.7,226.8 L215.5,229.9 L210.8,232.6 L205.6,235.0 L199.8,237.2 L193.3,239.1 L186.0,240.9 M272.7,326.0 L274.5,319.2 L276.5,313.0 L278.7,307.5 L281.1,302.5 L283.8,297.9 L286.8,293.8 L290.2,290.2 L293.8,286.8 L297.9,283.8 L302.5,281.1 L307.5,278.7 L313.0,276.5 L319.2,274.5 L326.0,272.7 M239.3,326.0 L237.5,319.2 L235.5,313.0 L233.3,307.5 L230.9,302.5 L228.2,297.9 L225.2,293.8 L221.8,290.2 L218.2,286.8 L214.1,283.8 L209.5,281.1 L204.5,278.7 L199.0,276.5 L192.8,274.5 L186.0,272.7 M272.7,186.0 L274.5,192.8 L276.5,199.0 L278.7,204.5 L281.1,209.5 L283.8,214.1 L286.8,218.2 L290.2,221.8 L293.8,225.2 L297.9,228.2 L302.5,230.9 L307.5,233.3 L313.0,235.5 L319.2,237.5 L326.0,239.3 M239.3,186.0 L237.5,192.8 L235.5,199.0 L233.3,204.5 L230.9,209.5 L228.2,214.1 L225.2,218.2 L221.8,221.8 L218.2,225.2 L214.1,228.2 L209.5,230.9 L204.5,233.3 L199.0,235.5 L192.8,237.5 L186.0,239.3 M276.1,319.6 L278.2,313.8 L280.4,308.5 L282.8,303.7 L285.5,299.3 L288.5,295.4 L291.8,291.8 L295.4,288.5 L299.3,285.5 L303.7,282.8 L308.5,280.4 L313.8,278.2 L319.6,276.1 M235.9,319.6 L233.8,313.8 L231.6,308.5 L229.2,303.7 L226.5,299.3 L223.5,295.4 L220.2,291.8 L216.6,288.5 L212.7,285.5 L208.3,282.8 L203.5,280.4 L198.2,278.2 L192.4,276.1 M276.1,192.4 L278.2,198.2 L280.4,203.5 L282.8,208.3 L285.5,212.7 L288.5,216.6 L291.8,220.2 L295.4,223.5 L299.3,226.5 L303.7,229.2 L308.5,231.6 L313.8,233.8 L319.6,235.9 M235.9,192.4 L233.8,198.2 L231.6,203.5 L229.2,208.3 L226.5,212.7 L223.5,216.6 L220.2,220.2 L216.6,223.5 L212.7,226.5 L208.3,229.2 L203.5,231.6 L198.2,233.8 L192.4,235.9 M277.9,320.0 L279.9,314.5 L282.1,309.5 L284.6,304.9 L287.3,300.7 L290.2,296.9 L293.4,293.4 L296.9,290.2 L300.7,287.3 L304.9,284.6 L309.5,282.1 L314.5,279.9 L320.0,277.9 M234.1,320.0 L232.1,314.5 L229.9,309.5 L227.4,304.9 L224.7,300.7 L221.8,296.9 L218.6,293.4 L215.1,290.2 L211.3,287.3 L207.1,284.6 L202.5,282.1 L197.5,279.9 L192.0,277.9 M277.9,192.0 L279.9,197.5 L282.1,202.5 L284.6,207.1 L287.3,211.3 L290.2,215.1 L293.4,218.6 L296.9,221.8 L300.7,224.7 L304.9,227.4 L309.5,229.9 L314.5,232.1 L320.0,234.1 M234.1,192.0 L232.1,197.5 L229.9,202.5 L227.4,207.1 L224.7,211.3 L221.8,215.1 L218.6,218.6 L215.1,221.8 L211.3,224.7 L207.1,227.4 L202.5,229.9 L197.5,232.1 L192.0,234.1 M281.7,315.2 L284.0,310.5 L286.4,306.1 L289.0,302.1 L291.9,298.4 L295.0,295.0 L298.4,291.9 L302.1,289.0 L306.1,286.4 L310.5,284.0 L315.2,281.7 M230.3,315.2 L228.0,310.5 L225.6,306.1 L223.0,302.1 L220.1,298.4 L217.0,295.0 L213.6,291.9 L209.9,289.0 L205.9,286.4 L201.5,284.0 L196.8,281.7 M281.7,196.8 L284.0,201.5 L286.4,205.9 L289.0,209.9 L291.9,213.6 L295.0,217.0 L298.4,220.1 L302.1,223.0 L306.1,225.6 L310.5,228.0 L315.2,230.3 M230.3,196.8 L228.0,201.5 L225.6,205.9 L223.0,209.9 L220.1,213.6 L217.0,217.0 L213.6,220.1 L209.9,223.0 L205.9,225.6 L201.5,228.0 L196.8,230.3 M285.8,311.5 L288.2,307.3 L290.8,303.5 L293.6,299.9 L296.7,296.7 L299.9,293.6 L303.5,290.8 L307.3,288.2 L311.5,285.8 M226.2,311.5 L223.8,307.3 L221.2,303.5 L218.4,299.9 L215.3,296.7 L212.1,293.6 L208.5,290.8 L204.7,288.2 L200.5,285.8 M285.8,200.5 L288.2,204.7 L290.8,208.5 L293.6,212.1 L296.7,215.3 L299.9,218.4 L303.5,221.2 L307.3,223.8 L311.5,226.2 M226.2,200.5 L223.8,204.7 L221.2,208.5 L218.4,212.1 L215.3,215.3 L212.1,218.4 L208.5,221.2 L204.7,223.8 L200.5,226.2 M290.1,308.5 L292.6,304.8 L295.3,301.4 L298.3,298.3 L301.4,295.3 L304.8,292.6 L308.5,290.1 M221.9,308.5 L219.4,304.8 L216.7,301.4 L213.7,298.3 L210.6,295.3 L207.2,292.6 L203.5,290.1 M290.1,203.5 L292.6,207.2 L295.3,210.6 L298.3,213.7 L301.4,216.7 L304.8,219.4 L308.5,221.9 M221.9,203.5 L219.4,207.2 L216.7,210.6 L213.7,213.7 L210.6,216.7 L207.2,219.4 L203.5,221.9" fill="none" stroke="#000" stroke-width="1.1"/></g>
<g id="planet">
<rect x="0" y="0" width="512" height="512" fill="#000"/>
<circle cx="261.5" cy="258" r="200" fill="url(#ghalo)"/>
<circle cx="261.5" cy="258" r="158" fill="url(#gplanet)" filter="url(#fpl)"/>
<g filter="url(#fmk)"><g clip-path="url(#cpl)">
<ellipse cx="185" cy="210" rx="45" ry="28" fill="#c6c6c6" opacity="0.7"/>
<ellipse cx="345" cy="290" rx="50" ry="55" fill="#c4c4c4" opacity="0.6"/>
<ellipse cx="300" cy="150" rx="55" ry="30" fill="#c0c0c0" opacity="0.5"/>
<ellipse cx="251" cy="185" rx="12" ry="40" fill="#a4a4a4" opacity="0.55"/>
<ellipse cx="258" cy="243" rx="32" ry="20" fill="#9c9c9c" opacity="0.7"/>
<ellipse cx="298" cy="232" rx="18" ry="10" fill="#a2a2a2" opacity="0.6"/>
<ellipse cx="335" cy="205" rx="20" ry="14" fill="#a4a4a4" opacity="0.6"/>
<ellipse cx="185" cy="290" rx="55" ry="50" fill="#aaaaaa" opacity="0.5"/>
<ellipse cx="260" cy="300" rx="110" ry="14" fill="#a8a8a8" opacity="0.5"/>
<ellipse cx="258" cy="352" rx="24" ry="10" fill="#c8c8c8" opacity="0.85"/>
</g></g>
<g clip-path="url(#cpl)"><rect width="512" height="512" filter="url(#fgrain)" opacity="0.1"/></g>
<g filter="url(#fcap)">
<ellipse cx="235" cy="390" rx="42" ry="10" fill="#c8c8c8" opacity="0.8"/>
<path d="M228,385 Q252,394 276,386 L274,396 Q250,402 226,394 Z" fill="#dcdcdc" opacity="0.9"/>
</g>
</g>
</defs></svg>
<div class="a" style="left:26px;top:410px;width:539px;height:540px;background:#3a3a3a"></div><div class="a" style="left:27px;top:411px;width:538px;height:539px;background:#6f6f6f"></div><div class="a" style="left:33px;top:416px;width:14px;height:14px;background:#c9c9ff"></div><div class="a" style="left:35px;top:420px;width:10px;height:8px;background:#6a6a6a"></div><div class="t b" style="left:47px;top:418px;width:437px;text-align:center;font-size:13px;letter-spacing:0.9px;color:#dcdad2">Gray 1:1 y0qmni03 | y0qmni03.bmp</div><svg class="a" style="left:484px;top:419px" width="76" height="11" viewBox="0 0 76 11">
<rect x="0.5" y="4" width="9.5" height="3" fill="#eee"/>
<rect x="21.5" y="1.5" width="9" height="2" fill="#eee"/><polygon points="26,3.3 31,8.8 21,8.8" fill="#eee"/>
<rect x="42.5" y="4" width="9" height="3" fill="#eee"/><rect x="45.5" y="0.8" width="3" height="9.2" fill="#eee"/>
<path d="M64,1.5 L72.5,10 M72.5,1.5 L64,10" stroke="#eee" stroke-width="2"/>
</svg><svg class="a" style="left:51px;top:436px" width="512" height="512"><use href="#planet"/></svg><svg class="a" style="left:29px;top:436px" width="22" height="81" viewBox="0 0 22 81">
<polygon points="0.5,22 22,0.5 22,80.5 0.5,80.5" fill="#555" stroke="#3c3c3c" stroke-width="1"/>

</svg><div class="t" style="left:33px;top:512px;font-size:12.5px;color:#e0e0e0;transform:rotate(-90deg);transform-origin:0 0">y0qmni03</div><svg class="a" style="left:34px;top:878px" width="16" height="64" viewBox="0 0 16 64" fill="none" stroke="#c4c4c4" stroke-width="1">
<path d="M1,0 L10.5,9.5"/><polygon points="4,9.5 10.5,9.5 10.5,3"/>
<rect x="3.5" y="20.5" width="5" height="5"/><path d="M1,18 L3.5,20.5 M11,18 L8.5,20.5 M1,28 L3.5,25.5 M11,28 L8.5,25.5"/>
<rect x="4.5" y="39.5" width="6" height="6"/><rect x="1.5" y="36.5" width="6" height="6" fill="#6f6f6f"/>
<circle cx="6" cy="59" r="4.8"/><circle cx="6" cy="59" r="2"/>
</svg><div class="a" style="left:579px;top:137px;width:539px;height:540px;background:#3a3a3a"></div><div class="a" style="left:580px;top:138px;width:538px;height:539px;background:#6f6f6f"></div><div class="a" style="left:586px;top:143px;width:14px;height:14px;background:#c9c9ff"></div><div class="a" style="left:588px;top:147px;width:10px;height:8px;background:#6a6a6a"></div><div class="t b" style="left:600px;top:145px;width:437px;text-align:center;font-size:13px;letter-spacing:0.9px;color:#dcdad2">Gray 1:1 DFT_phase | &lt;*new*&gt;</div><svg class="a" style="left:1037px;top:146px" width="76" height="11" viewBox="0 0 76 11">
<rect x="0.5" y="4" width="9.5" height="3" fill="#eee"/>
<rect x="21.5" y="1.5" width="9" height="2" fill="#eee"/><polygon points="26,3.3 31,8.8 21,8.8" fill="#eee"/>
<rect x="42.5" y="4" width="9" height="3" fill="#eee"/><rect x="45.5" y="0.8" width="3" height="9.2" fill="#eee"/>
<path d="M64,1.5 L72.5,10 M72.5,1.5 L64,10" stroke="#eee" stroke-width="2"/>
</svg><svg class="a" style="left:604px;top:163px" width="512" height="512"><rect width="512" height="512" fill="#808080" filter="url(#fphase)"/><use href="#hyper"/></svg><svg class="a" style="left:582px;top:163px" width="22" height="90" viewBox="0 0 22 90">
<polygon points="0.5,22 22,0.5 22,89.5 0.5,89.5" fill="#555" stroke="#3c3c3c" stroke-width="1"/>

</svg><div class="t" style="left:586px;top:248px;font-size:12.5px;color:#e0e0e0;transform:rotate(-90deg);transform-origin:0 0">DFT_phase</div><svg class="a" style="left:587px;top:605px" width="16" height="64" viewBox="0 0 16 64" fill="none" stroke="#c4c4c4" stroke-width="1">
<path d="M1,0 L10.5,9.5"/><polygon points="4,9.5 10.5,9.5 10.5,3"/>
<rect x="3.5" y="20.5" width="5" height="5"/><path d="M1,18 L3.5,20.5 M11,18 L8.5,20.5 M1,28 L3.5,25.5 M11,28 L8.5,25.5"/>
<rect x="4.5" y="39.5" width="6" height="6"/><rect x="1.5" y="36.5" width="6" height="6" fill="#6f6f6f"/>
<circle cx="6" cy="59" r="4.8"/><circle cx="6" cy="59" r="2"/>
</svg><div class="a" style="left:579px;top:698px;width:539px;height:540px;background:#3a3a3a"></div><div class="a" style="left:580px;top:699px;width:538px;height:539px;background:#6f6f6f"></div><div class="a" style="left:586px;top:704px;width:14px;height:14px;background:#c9c9ff"></div><div class="a" style="left:588px;top:708px;width:10px;height:8px;background:#6a6a6a"></div><div class="t b" style="left:600px;top:706px;width:437px;text-align:center;font-size:13px;letter-spacing:0.9px;color:#dcdad2">Gray 1:1 DFT_magnitude_clone | &lt;*new*&gt;</div><svg class="a" style="left:1037px;top:707px" width="76" height="11" viewBox="0 0 76 11">
<rect x="0.5" y="4" width="9.5" height="3" fill="#eee"/>
<rect x="21.5" y="1.5" width="9" height="2" fill="#eee"/><polygon points="26,3.3 31,8.8 21,8.8" fill="#eee"/>
<rect x="42.5" y="4" width="9" height="3" fill="#eee"/><rect x="45.5" y="0.8" width="3" height="9.2" fill="#eee"/>
<path d="M64,1.5 L72.5,10 M72.5,1.5 L64,10" stroke="#eee" stroke-width="2"/>
</svg><svg class="a" style="left:604px;top:724px" width="512" height="512"><rect width="512" height="512" fill="#474747" filter="url(#fmag)"/>
<ellipse cx="256" cy="256" rx="150" ry="140" fill="url(#ghalo2)"/>
<ellipse cx="256" cy="256" rx="62" ry="57" fill="url(#gblob)"/>
<circle cx="256" cy="194" r="2.2" fill="#fff" opacity="0.9"/><circle cx="256" cy="318" r="2.2" fill="#fff" opacity="0.9"/><ellipse cx="256" cy="163" rx="3" ry="1.5" fill="#ccc" opacity="0.6"/><ellipse cx="256" cy="349" rx="3" ry="1.5" fill="#ccc" opacity="0.6"/>
</svg><svg class="a" style="left:582px;top:724px" width="22" height="150" viewBox="0 0 22 150">
<polygon points="0.5,22 22,0.5 22,149.5 0.5,149.5" fill="#555" stroke="#3c3c3c" stroke-width="1"/>
<rect x='20' y='2' width='2' height='147' fill='#18c060'/>
</svg><div class="t" style="left:586px;top:869px;font-size:12.5px;color:#e0e0e0;transform:rotate(-90deg);transform-origin:0 0">DFT_magnitude_clone</div><svg class="a" style="left:587px;top:1166px" width="16" height="64" viewBox="0 0 16 64" fill="none" stroke="#c4c4c4" stroke-width="1">
<path d="M1,0 L10.5,9.5"/><polygon points="4,9.5 10.5,9.5 10.5,3"/>
<rect x="3.5" y="20.5" width="5" height="5"/><path d="M1,18 L3.5,20.5 M11,18 L8.5,20.5 M1,28 L3.5,25.5 M11,28 L8.5,25.5"/>
<rect x="4.5" y="39.5" width="6" height="6"/><rect x="1.5" y="36.5" width="6" height="6" fill="#6f6f6f"/>
<circle cx="6" cy="59" r="4.8"/><circle cx="6" cy="59" r="2"/>
</svg><div class="a" style="left:1139px;top:698px;width:539px;height:540px;background:#3a3a3a"></div><div class="a" style="left:1140px;top:699px;width:538px;height:539px;background:#6f6f6f"></div><div class="a" style="left:1146px;top:704px;width:14px;height:14px;background:#c9c9ff"></div><div class="a" style="left:1148px;top:708px;width:10px;height:8px;background:#6a6a6a"></div><div class="t b" style="left:1160px;top:706px;width:437px;text-align:center;font-size:13px;letter-spacing:0.9px;color:#dcdad2">Gray 1:1 DFT_magnitude | &lt;*new*&gt;</div><svg class="a" style="left:1597px;top:707px" width="76" height="11" viewBox="0 0 76 11">
<rect x="0.5" y="4" width="9.5" height="3" fill="#eee"/>
<rect x="21.5" y="1.5" width="9" height="2" fill="#eee"/><polygon points="26,3.3 31,8.8 21,8.8" fill="#eee"/>
<rect x="42.5" y="4" width="9" height="3" fill="#eee"/><rect x="45.5" y="0.8" width="3" height="9.2" fill="#eee"/>
<path d="M64,1.5 L72.5,10 M72.5,1.5 L64,10" stroke="#eee" stroke-width="2"/>
</svg><svg class="a" style="left:1164px;top:724px" width="512" height="512"><rect width="512" height="512" fill="#474747" filter="url(#fmag)"/>
<ellipse cx="256" cy="256" rx="150" ry="140" fill="url(#ghalo2)"/>
<ellipse cx="256" cy="256" rx="62" ry="57" fill="url(#gblob)"/>
<circle cx="256" cy="194" r="1.5" fill="#bbb" opacity="0.5"/><circle cx="256" cy="318" r="1.5" fill="#bbb" opacity="0.5"/>
</svg><svg class="a" style="left:1142px;top:724px" width="22" height="113" viewBox="0 0 22 113">
<polygon points="0.5,22 22,0.5 22,112.5 0.5,112.5" fill="#555" stroke="#3c3c3c" stroke-width="1"/>
<rect x='20' y='2' width='2' height='110' fill='#18c060'/>
</svg><div class="t" style="left:1146px;top:832px;font-size:12.5px;color:#e0e0e0;transform:rotate(-90deg);transform-origin:0 0">DFT_magnitude</div><svg class="a" style="left:1147px;top:1166px" width="16" height="64" viewBox="0 0 16 64" fill="none" stroke="#c4c4c4" stroke-width="1">
<path d="M1,0 L10.5,9.5"/><polygon points="4,9.5 10.5,9.5 10.5,3"/>
<rect x="3.5" y="20.5" width="5" height="5"/><path d="M1,18 L3.5,20.5 M11,18 L8.5,20.5 M1,28 L3.5,25.5 M11,28 L8.5,25.5"/>
<rect x="4.5" y="39.5" width="6" height="6"/><rect x="1.5" y="36.5" width="6" height="6" fill="#6f6f6f"/>
<circle cx="6" cy="59" r="4.8"/><circle cx="6" cy="59" r="2"/>
</svg><div class="a" style="left:1726px;top:424px;width:539px;height:540px;background:#3a3a3a"></div><div class="a" style="left:1727px;top:425px;width:538px;height:539px;background:#6f6f6f"></div><div class="a" style="left:1733px;top:430px;width:14px;height:14px;background:#c9c9ff"></div><div class="a" style="left:1735px;top:434px;width:10px;height:8px;background:#6a6a6a"></div><div class="t b" style="left:1747px;top:432px;width:437px;text-align:center;font-size:13px;letter-spacing:0.9px;color:#dcdad2">Gray 1:1 inverse_DFT | &lt;*new*&gt;</div><svg class="a" style="left:2184px;top:433px" width="76" height="11" viewBox="0 0 76 11">
<rect x="0.5" y="4" width="9.5" height="3" fill="#eee"/>
<rect x="21.5" y="1.5" width="9" height="2" fill="#eee"/><polygon points="26,3.3 31,8.8 21,8.8" fill="#eee"/>
<rect x="42.5" y="4" width="9" height="3" fill="#eee"/><rect x="45.5" y="0.8" width="3" height="9.2" fill="#eee"/>
<path d="M64,1.5 L72.5,10 M72.5,1.5 L64,10" stroke="#eee" stroke-width="2"/>
</svg><svg class="a" style="left:1751px;top:450px" width="512" height="512"><use href="#planet"/></svg><svg class="a" style="left:1729px;top:450px" width="22" height="97" viewBox="0 0 22 97">
<polygon points="0.5,22 22,0.5 22,96.5 0.5,96.5" fill="#555" stroke="#3c3c3c" stroke-width="1"/>

</svg><div class="t" style="left:1733px;top:542px;font-size:12.5px;color:#e0e0e0;transform:rotate(-90deg);transform-origin:0 0">inverse_DFT</div><svg class="a" style="left:1734px;top:892px" width="16" height="64" viewBox="0 0 16 64" fill="none" stroke="#c4c4c4" stroke-width="1">
<path d="M1,0 L10.5,9.5"/><polygon points="4,9.5 10.5,9.5 10.5,3"/>
<rect x="3.5" y="20.5" width="5" height="5"/><path d="M1,18 L3.5,20.5 M11,18 L8.5,20.5 M1,28 L3.5,25.5 M11,28 L8.5,25.5"/>
<rect x="4.5" y="39.5" width="6" height="6"/><rect x="1.5" y="36.5" width="6" height="6" fill="#6f6f6f"/>
<circle cx="6" cy="59" r="4.8"/><circle cx="6" cy="59" r="2"/>
</svg><div class="a" style="left:175px;top:969px;width:254px;height:100px;background:#6a6a6a;border:1px solid #505050"></div><div class="a" style="left:177px;top:994px;width:250px;height:50px;background:#c8c8c8"></div><div class="a" style="left:177px;top:1044px;width:250px;height:23px;background:#b0ada6"></div><svg class="a" style="left:180px;top:974px" width="17" height="17" viewBox="0 0 17 17">
<defs><radialGradient id="gft" cx="0.5" cy="0.5" r="0.5"><stop offset="0" stop-color="#fff"/><stop offset="0.25" stop-color="#999"/><stop offset="1" stop-color="#222"/></radialGradient></defs>
<rect width="17" height="17" fill="#1e1e1e"/><circle cx="8.5" cy="8.5" r="6" fill="url(#gft)"/>
<path d="M1,1 L16,16 M16,1 L1,16 M8.5,0 V17 M0,8.5 H17" stroke="#aaa" stroke-width="0.6" opacity="0.6"/></svg><div class="t b" style="left:234px;top:976px;font-size:13px;letter-spacing:0.5px;color:#bab8b0">FourierTransform</div><svg class="a" style="left:390px;top:977px" width="32" height="11" viewBox="0 0 32 11">
<rect x="0.5" y="1.5" width="9" height="2" fill="#eee"/><polygon points="5,3.3 10,8.8 0,8.8" fill="#eee"/>
<path d="M22,1.5 L30.5,10 M30.5,1.5 L22,10" stroke="#eee" stroke-width="2"/></svg><div class="a" style="left:185px;top:1002px;width:13px;height:13px;background:#f0f0f0;border:1px solid #555"></div><svg class="a" style="left:186px;top:1003px" width="11" height="11" viewBox="0 0 11 11"><path d="M1.5,5.5 L4,8.5 L9.5,2" stroke="#000" stroke-width="1.8" fill="none"/></svg><div class="t" style="left:204px;top:1005px;font-size:12.5px;color:#111">Centered</div><div class="a" style="left:185px;top:1022px;width:13px;height:13px;background:#f0f0f0;border:1px solid #555"></div><svg class="a" style="left:186px;top:1023px" width="11" height="11" viewBox="0 0 11 11"><path d="M1.5,5.5 L4,8.5 L9.5,2" stroke="#000" stroke-width="1.8" fill="none"/></svg><div class="t" style="left:204px;top:1025px;font-size:12.5px;color:#111">Power Spectrum</div><div class="a" style="left:181px;top:1046px;width:21px;height:21px;border:1px solid #7aa0e0;background:linear-gradient(#f4f4f4,#c8d4e8)"></div><svg class="a" style="left:186px;top:1050px" width="12" height="12" viewBox="0 0 12 12"><polygon points="0,0 11,11 0,11" fill="#1060c0"/></svg><div class="a" style="left:211px;top:1050px;width:11px;height:11px;background:#1060c0"></div><svg class="a" style="left:358px;top:1049px" width="64" height="15" viewBox="0 0 64 15">
<rect x="1" y="2" width="9" height="9" fill="none" stroke="#1060c0" stroke-width="2"/>
<path d="M26,2 H31.5 L35,5.5 V11 H26 Z" fill="none" stroke="#1060c0" stroke-width="2"/><polygon points="31,1 36,6 31,6" fill="#1060c0"/>
<g stroke="#1060c0" stroke-width="1.8" stroke-linecap="round"><path d="M50,1.5 L53.5,5 M62,1.5 L58.5,5 M50,13.5 L53.5,10 M62,13.5 L58.5,10"/></g>
<g fill="#1060c0"><polygon points="55,6.5 55,2.2 50.7,6.5"/><polygon points="57,6.5 57,2.2 61.3,6.5"/><polygon points="55,8.5 55,12.8 50.7,8.5"/><polygon points="57,8.5 57,12.8 61.3,8.5"/></g>
</svg><div class="a" style="left:1125px;top:488px;width:592px;height:138px;background:#6a6a6a;border:1px solid #505050"></div><div class="a" style="left:1128px;top:513px;width:586px;height:88px;background:#c8c8c8"></div><div class="a" style="left:1128px;top:601px;width:586px;height:23px;background:#b0ada6"></div><svg class="a" style="left:1131px;top:493px" width="16" height="16" viewBox="0 0 16 16">
<defs><radialGradient id="gift" cx="0.5" cy="0.5" r="0.6"><stop offset="0" stop-color="#111"/><stop offset="0.5" stop-color="#999"/><stop offset="1" stop-color="#ddd"/></radialGradient></defs>
<rect width="16" height="16" fill="url(#gift)"/><path d="M0,0 L16,16 M16,0 L0,16 M8,0 V16 M0,8 H16" stroke="#555" stroke-width="0.6" opacity="0.7"/></svg><div class="t b" style="left:1328px;top:495px;font-size:13px;letter-spacing:0.6px;color:#bab8b0">InverseFourierTransform</div><svg class="a" style="left:1677px;top:496px" width="32" height="11" viewBox="0 0 32 11">
<rect x="0.5" y="1.5" width="9" height="2" fill="#eee"/><polygon points="5,3.3 10,8.8 0,8.8" fill="#eee"/>
<path d="M22,1.5 L30.5,10 M30.5,1.5 L22,10" stroke="#eee" stroke-width="2"/></svg><div class="t" style="left:1076px;width:200px;text-align:right;top:527px;font-size:12.5px;color:#111">First DFT component:</div><div class="a" style="left:1282px;top:521px;width:400px;height:20px;background:#e2e2e2;border:1px solid #6c6c6c"></div><div class="t" style="left:1288px;top:527px;font-size:12.5px;color:#111">DFT_magnitude</div><svg class="a" style="left:1691px;top:526px" width="10" height="10" viewBox="0 0 10 10"><rect x="0.5" y="0.5" width="9" height="9" fill="none" stroke="#444"/><rect x="0" y="0" width="10" height="3" fill="#444"/></svg><div class="t" style="left:1076px;width:200px;text-align:right;top:553px;font-size:12.5px;color:#111">Second DFT component:</div><div class="a" style="left:1282px;top:547px;width:400px;height:20px;background:#e2e2e2;border:1px solid #6c6c6c"></div><div class="t" style="left:1288px;top:553px;font-size:12.5px;color:#111">DFT_phase</div><svg class="a" style="left:1691px;top:552px" width="10" height="10" viewBox="0 0 10 10"><rect x="0.5" y="0.5" width="9" height="9" fill="none" stroke="#444"/><rect x="0" y="0" width="10" height="3" fill="#444"/></svg><div class="t" style="left:1076px;width:200px;text-align:right;top:579px;font-size:12.5px;color:#111;letter-spacing:0.2px">On out-of-range result:</div><div class="a" style="left:1282px;top:573px;width:99px;height:20px;background:linear-gradient(#e8e8e8,#d0d0d0);border:1px solid #6c6c6c"></div><div class="a" style="left:1362px;top:576px;width:1px;height:14px;background:#999"></div><svg class="a" style="left:1366px;top:579px" width="10" height="7" viewBox="0 0 10 7"><polygon points="0,0 10,0 5,6" fill="#111"/></svg><div class="t" style="left:1288px;top:579px;font-size:12.5px;color:#111">Truncate</div><svg class="a" style="left:1137px;top:608px" width="12" height="11" viewBox="0 0 12 11"><polygon points="0,0 11,11 0,11" fill="#1060c0"/></svg><div class="a" style="left:1162px;top:608px;width:11px;height:11px;border-radius:50%;background:#1060c0"></div><svg class="a" style="left:1644px;top:606px" width="64" height="15" viewBox="0 0 64 15">
<rect x="1" y="2" width="9" height="9" fill="none" stroke="#1060c0" stroke-width="2"/>
<path d="M26,2 H31.5 L35,5.5 V11 H26 Z" fill="none" stroke="#1060c0" stroke-width="2"/><polygon points="31,1 36,6 31,6" fill="#1060c0"/>
<g stroke="#1060c0" stroke-width="1.8" stroke-linecap="round"><path d="M50,1.5 L53.5,5 M62,1.5 L58.5,5 M50,13.5 L53.5,10 M62,13.5 L58.5,10"/></g>
<g fill="#1060c0"><polygon points="55,6.5 55,2.2 50.7,6.5"/><polygon points="57,6.5 57,2.2 61.3,6.5"/><polygon points="55,8.5 55,12.8 50.7,8.5"/><polygon points="57,8.5 57,12.8 61.3,8.5"/></g>
</svg><div class="a" style="left:1703px;top:1030px;width:431px;height:175px;background:#5564a8;border:1px solid #333a60"></div><div class="a" style="left:1706px;top:1056px;width:425px;height:123px;background:#d4d4d4"></div><div class="a" style="left:1706px;top:1179px;width:425px;height:23px;background:#c4c0b8"></div><svg class="a" style="left:1708px;top:1035px" width="18" height="18" viewBox="0 0 18 18">
<defs><radialGradient id="gcs1" cx="0.3" cy="0.3" r="0.7"><stop offset="0" stop-color="#6a6aff"/><stop offset="1" stop-color="#1010c0"/></radialGradient>
<radialGradient id="gcs2" cx="0.6" cy="0.7" r="0.7"><stop offset="0" stop-color="#e0a0ff"/><stop offset="1" stop-color="#8020e0"/></radialGradient></defs>
<rect width="18" height="18" fill="#2a9a3a"/><circle cx="7" cy="7" r="6" fill="url(#gcs1)"/><circle cx="11.5" cy="11.5" r="6" fill="url(#gcs2)"/></svg><div class="t b" style="left:1869px;top:1036px;font-size:13.5px;color:#fff">CloneStamp</div><svg class="a" style="left:2094px;top:1039px" width="32" height="11" viewBox="0 0 32 11">
<rect x="0.5" y="1.5" width="9" height="2" fill="#eee"/><polygon points="5,3.3 10,8.8 0,8.8" fill="#eee"/>
<path d="M22,1.5 L30.5,10 M30.5,1.5 L22,10" stroke="#eee" stroke-width="2"/></svg><div class="t" style="left:1676px;width:98px;text-align:right;top:1069px;font-size:12.5px;color:#111">Radius:</div><div class="t" style="left:1676px;width:98px;text-align:right;top:1105px;font-size:12.5px;color:#111">Softness:</div><div class="t" style="left:1676px;width:98px;text-align:right;top:1129px;font-size:12.5px;color:#111">Opacity:</div><div class="a" style="left:1779px;top:1064px;width:56px;height:20px;background:#cdcdcd;border:1px solid #8a8a8a"></div><div class="t" style="left:1785px;top:1069px;font-size:12.5px;color:#999">10</div><div class="a" style="left:1779px;top:1100px;width:56px;height:20px;background:#cdcdcd;border:1px solid #8a8a8a"></div><div class="t" style="left:1785px;top:1105px;font-size:12.5px;color:#999">0.50</div><div class="a" style="left:1779px;top:1124px;width:56px;height:20px;background:#cdcdcd;border:1px solid #8a8a8a"></div><div class="t" style="left:1785px;top:1129px;font-size:12.5px;color:#999">1.00</div><svg class="a" style="left:1820px;top:1065px" width="14" height="18" viewBox="0 0 14 18"><rect x="0" y="0" width="14" height="18" fill="#d8d8d8"/><polygon points="3,7 11,7 7,3" fill="#888"/><polygon points="3,11 11,11 7,15" fill="#888"/></svg><div class="a" style="left:1858px;top:1064px;width:82px;height:21px;background:#d0d0d0;border:1px solid #8a8a8a"></div><div class="t" style="left:1866px;top:1069px;font-size:12.5px;color:#999">Copy brush</div><div class="a" style="left:1944px;top:1067px;width:13px;height:13px;background:#d8d8d8;border:1px solid #8a8a8a"></div><div class="t" style="left:1963px;top:1069px;font-size:12.5px;color:#111">Show bounds</div><div class="a" style="left:1839px;top:1108px;width:200px;height:5px;background:#f0f0f0;border:1px solid #999"></div><div class="a" style="left:1839px;top:1108px;width:100px;height:5px;background:#a8a8a8;border:1px solid #999"></div><div class="a" style="left:1933px;top:1104px;width:12px;height:12px;border-radius:50%;background:radial-gradient(circle at 40% 40%,#bbb,#777)"></div><div class="a" style="left:1839px;top:1132px;width:200px;height:5px;background:#a8a8a8;border:1px solid #999"></div><div class="a" style="left:2027px;top:1128px;width:12px;height:12px;border-radius:50%;background:radial-gradient(circle at 40% 40%,#bbb,#777)"></div><svg class="a" style="left:2043px;top:1064px" width="80" height="80" viewBox="0 0 80 80">
<defs><radialGradient id="gbr" cx="0.5" cy="0.5" r="0.5"><stop offset="0" stop-color="#f4f4f4"/><stop offset="0.55" stop-color="#ececec"/><stop offset="0.72" stop-color="#c0c0c0"/><stop offset="0.86" stop-color="#3a3a3a"/><stop offset="0.95" stop-color="#0a0a0a"/><stop offset="1" stop-color="#0a0a0a"/></radialGradient></defs>
<rect width="80" height="80" fill="#0a0a0a"/><circle cx="40" cy="40" r="40" fill="url(#gbr)"/></svg><div class="t" style="left:1714px;top:1155px;font-size:12.5px;color:#111">No target view selected</div><svg class="a" style="left:2004px;top:1152px" width="118" height="15" viewBox="0 0 118 15" fill="#9a9a9a">
<path d="M1,2 L12,13 M12,2 L1,13" stroke="#9a9a9a" stroke-width="2.5"/>
<rect x="27" y="1" width="3" height="13"/><polygon points="37,1 30,7.5 37,14"/><polygon points="44,1 37,7.5 44,14"/>
<polygon points="66,1 53,7.5 66,14"/>
<polygon points="76,1 89,7.5 76,14"/>
<polygon points="100,1 107,7.5 100,14"/><polygon points="107,1 114,7.5 107,14"/><rect x="114" y="1" width="3" height="13"/>
</svg><svg class="a" style="left:1715px;top:1184px" width="12" height="11" viewBox="0 0 12 11"><polygon points="0,0 11,11 0,11" fill="#1060c0"/></svg><svg class="a" style="left:1738px;top:1184px" width="14" height="12" viewBox="0 0 14 12"><path d="M1,6 L5,10 L13,1" stroke="#2a9a2a" stroke-width="2.6" fill="none"/></svg><svg class="a" style="left:1764px;top:1184px" width="12" height="12" viewBox="0 0 12 12"><path d="M1,1 L11,11 M11,1 L1,11" stroke="#e04a2a" stroke-width="2.6"/></svg><svg class="a" style="left:2062px;top:1183px" width="64" height="15" viewBox="0 0 64 15">
<rect x="1" y="2" width="9" height="9" fill="none" stroke="#1060c0" stroke-width="2"/>
<path d="M26,2 H31.5 L35,5.5 V11 H26 Z" fill="none" stroke="#1060c0" stroke-width="2"/><polygon points="31,1 36,6 31,6" fill="#1060c0"/>
<g stroke="#1060c0" stroke-width="1.8" stroke-linecap="round"><path d="M50,1.5 L53.5,5 M62,1.5 L58.5,5 M50,13.5 L53.5,10 M62,13.5 L58.5,10"/></g>
<g fill="#1060c0"><polygon points="55,6.5 55,2.2 50.7,6.5"/><polygon points="57,6.5 57,2.2 61.3,6.5"/><polygon points="55,8.5 55,12.8 50.7,8.5"/><polygon points="57,8.5 57,12.8 61.3,8.5"/></g>
</svg><div class="a" style="left:0;top:116px;width:26px;height:1250px;background:#3e3e3e"></div><div class="a" style="left:0;top:608px;width:25px;height:424px;background:#6b6b6b"></div><div class="a" style="left:1px;top:116px;width:23px;height:126px;background:#4a4a4a;border:1px solid #3a3a3a"></div><div class="a" style="left:0;top:242px;width:26px;height:2px;background:#6a6a6a"></div><div class="t" style="left:7px;top:122px;height:0;width:0"><div class="t" style="right:0;top:0;font-size:12.5px;color:#dcdcdc;letter-spacing:0;transform:rotate(-90deg);transform-origin:100% 0;">Process Console</div></div><div class="a" style="left:1px;top:244px;width:23px;height:113px;background:#4a4a4a;border:1px solid #3a3a3a"></div><div class="a" style="left:0;top:357px;width:26px;height:2px;background:#6a6a6a"></div><div class="t" style="left:7px;top:251px;height:0;width:0"><div class="t" style="right:0;top:0;font-size:12.5px;color:#dcdcdc;letter-spacing:0;transform:rotate(-90deg);transform-origin:100% 0;">View Explorer</div></div><div class="a" style="left:1px;top:359px;width:23px;height:129px;background:#4a4a4a;border:1px solid #3a3a3a"></div><div class="a" style="left:0;top:488px;width:26px;height:2px;background:#6a6a6a"></div><div class="t" style="left:7px;top:365px;height:0;width:0"><div class="t" style="right:0;top:0;font-size:12.5px;color:#dcdcdc;letter-spacing:0;transform:rotate(-90deg);transform-origin:100% 0;">Process Explorer</div></div><div class="a" style="left:1px;top:490px;width:23px;height:118px;background:#4a4a4a;border:1px solid #3a3a3a"></div><div class="a" style="left:0;top:608px;width:26px;height:2px;background:#6a6a6a"></div><div class="t" style="left:7px;top:496px;height:0;width:0"><div class="t" style="right:0;top:0;font-size:12.5px;color:#dcdcdc;letter-spacing:0;transform:rotate(-90deg);transform-origin:100% 0;">Format Explorer</div></div><div class="a" style="left:1px;top:1032px;width:23px;height:103px;background:#4a4a4a;border:1px solid #3a3a3a"></div><div class="a" style="left:0;top:1135px;width:26px;height:2px;background:#6a6a6a"></div><div class="t" style="left:7px;top:1036px;height:0;width:0"><div class="t" style="right:0;top:0;font-size:12.5px;color:#dcdcdc;letter-spacing:0;transform:rotate(-90deg);transform-origin:100% 0;">File Explorer</div></div><div class="a" style="left:1px;top:1137px;width:23px;height:103px;background:#4a4a4a;border:1px solid #3a3a3a"></div><div class="a" style="left:0;top:1240px;width:26px;height:2px;background:#6a6a6a"></div><div class="t" style="left:7px;top:1143px;height:0;width:0"><div class="t" style="right:0;top:0;font-size:12.5px;color:#dcdcdc;letter-spacing:0;transform:rotate(-90deg);transform-origin:100% 0;">Script Editor</div></div><div class="a" style="left:1px;top:1242px;width:23px;height:124px;background:#4a4a4a;border:1px solid #3a3a3a"></div><div class="t" style="left:7px;top:1248px;height:0;width:0"><div class="t" style="right:0;top:0;font-size:12.5px;color:#dcdcdc;letter-spacing:0;transform:rotate(-90deg);transform-origin:100% 0;">History Explorer</div></div><svg class="a" style="left:4px;top:221px" width="17" height="15" viewBox="0 0 17 15"><polygon points="1.4,1 1.4,13.5 15.6,7.4" fill="#f86a3a" stroke="#111" stroke-width="1.1"/><path d="M4.5,7.4 L1.4,1 M4.5,7.4 L1.4,13.5 M4.5,7.4 H15.6" stroke="#222" stroke-width="0.9"/></svg><div class="a" style="left:5px;top:335px;width:15px;height:15px;background:#3aa0ff;border:1px solid #222"></div><svg class="a" style="left:5px;top:466px" width="16" height="16" viewBox="0 0 16 16"><circle cx="8" cy="8" r="5" fill="none" stroke="#eee" stroke-width="2.5"/><path d="M8,0.5 V15.5 M0.5,8 H15.5 M2.7,2.7 L13.3,13.3 M13.3,2.7 L2.7,13.3" stroke="#eee" stroke-width="2.2"/><circle cx="8" cy="8" r="3" fill="#4a4a4a"/></svg><div class="a" style="left:5px;top:592px;width:16px;height:16px;border-radius:50%;background:#e050e0;border:1px solid #222"></div><svg class="a" style="left:5px;top:1112px" width="16" height="17" viewBox="0 0 16 17"><path d="M1,3.5 V13.5 A7,3 0 0 0 15,13.5 V3.5" fill="#d8c8a0" stroke="#333"/><ellipse cx="8" cy="3.5" rx="7" ry="3" fill="#e8dcc0" stroke="#333"/></svg><svg class="a" style="left:5px;top:1218px" width="16" height="16" viewBox="0 0 16 16"><polygon points="1,1 10,1 15,6 15,15 1,15" fill="#10c8a0" stroke="#222"/><path d="M10,1 V6 H15" fill="none" stroke="#222"/></svg><svg class="a" style="left:4px;top:1344px" width="18" height="17" viewBox="0 0 18 17"><polygon points="8.5,1.2 15.7,11 8.5,15.6 1,11.2" fill="#f89040" stroke="#111" stroke-width="1.1"/><path d="M8.5,1.2 V15.6" stroke="#222" stroke-width="1"/></svg><div class="a" style="left:0;top:1366px;width:2300px;height:34px;background:#f0f0f0;border-top:1px solid #303030"></div><div class="a" style="left:0;top:1367px;width:2300px;height:1px;background:#fff"></div><svg class="a" style="left:7px;top:1373px" width="6" height="20" viewBox="0 0 6 20"><rect x="1" y="1" width="1" height="1" fill="#fff"/><rect x="0" y="0" width="1.4" height="1.4" fill="#555"/><rect x="5" y="1" width="1" height="1" fill="#fff"/><rect x="4" y="0" width="1.4" height="1.4" fill="#555"/><rect x="3" y="3" width="1" height="1" fill="#fff"/><rect x="2" y="2" width="1.4" height="1.4" fill="#555"/><rect x="1" y="5" width="1" height="1" fill="#fff"/><rect x="0" y="4" width="1.4" height="1.4" fill="#555"/><rect x="5" y="5" width="1" height="1" fill="#fff"/><rect x="4" y="4" width="1.4" height="1.4" fill="#555"/><rect x="3" y="7" width="1" height="1" fill="#fff"/><rect x="2" y="6" width="1.4" height="1.4" fill="#555"/><rect x="1" y="9" width="1" height="1" fill="#fff"/><rect x="0" y="8" width="1.4" height="1.4" fill="#555"/><rect x="5" y="9" width="1" height="1" fill="#fff"/><rect x="4" y="8" width="1.4" height="1.4" fill="#555"/><rect x="3" y="11" width="1" height="1" fill="#fff"/><rect x="2" y="10" width="1.4" height="1.4" fill="#555"/><rect x="1" y="13" width="1" height="1" fill="#fff"/><rect x="0" y="12" width="1.4" height="1.4" fill="#555"/><rect x="5" y="13" width="1" height="1" fill="#fff"/><rect x="4" y="12" width="1.4" height="1.4" fill="#555"/><rect x="3" y="15" width="1" height="1" fill="#fff"/><rect x="2" y="14" width="1.4" height="1.4" fill="#555"/><rect x="1" y="17" width="1" height="1" fill="#fff"/><rect x="0" y="16" width="1.4" height="1.4" fill="#555"/><rect x="5" y="17" width="1" height="1" fill="#fff"/><rect x="4" y="16" width="1.4" height="1.4" fill="#555"/><rect x="3" y="19" width="1" height="1" fill="#fff"/><rect x="2" y="18" width="1.4" height="1.4" fill="#555"/></svg><svg class="a" style="left:332px;top:1373px" width="6" height="20" viewBox="0 0 6 20"><rect x="1" y="1" width="1" height="1" fill="#fff"/><rect x="0" y="0" width="1.4" height="1.4" fill="#555"/><rect x="5" y="1" width="1" height="1" fill="#fff"/><rect x="4" y="0" width="1.4" height="1.4" fill="#555"/><rect x="3" y="3" width="1" height="1" fill="#fff"/><rect x="2" y="2" width="1.4" height="1.4" fill="#555"/><rect x="1" y="5" width="1" height="1" fill="#fff"/><rect x="0" y="4" width="1.4" height="1.4" fill="#555"/><rect x="5" y="5" width="1" height="1" fill="#fff"/><rect x="4" y="4" width="1.4" height="1.4" fill="#555"/><rect x="3" y="7" width="1" height="1" fill="#fff"/><rect x="2" y="6" width="1.4" height="1.4" fill="#555"/><rect x="1" y="9" width="1" height="1" fill="#fff"/><rect x="0" y="8" width="1.4" height="1.4" fill="#555"/><rect x="5" y="9" width="1" height="1" fill="#fff"/><rect x="4" y="8" width="1.4" height="1.4" fill="#555"/><rect x="3" y="11" width="1" height="1" fill="#fff"/><rect x="2" y="10" width="1.4" height="1.4" fill="#555"/><rect x="1" y="13" width="1" height="1" fill="#fff"/><rect x="0" y="12" width="1.4" height="1.4" fill="#555"/><rect x="5" y="13" width="1" height="1" fill="#fff"/><rect x="4" y="12" width="1.4" height="1.4" fill="#555"/><rect x="3" y="15" width="1" height="1" fill="#fff"/><rect x="2" y="14" width="1.4" height="1.4" fill="#555"/><rect x="1" y="17" width="1" height="1" fill="#fff"/><rect x="0" y="16" width="1.4" height="1.4" fill="#555"/><rect x="5" y="17" width="1" height="1" fill="#fff"/><rect x="4" y="16" width="1.4" height="1.4" fill="#555"/><rect x="3" y="19" width="1" height="1" fill="#fff"/><rect x="2" y="18" width="1.4" height="1.4" fill="#555"/></svg><svg class="a" style="left:441px;top:1373px" width="6" height="20" viewBox="0 0 6 20"><rect x="1" y="1" width="1" height="1" fill="#fff"/><rect x="0" y="0" width="1.4" height="1.4" fill="#555"/><rect x="5" y="1" width="1" height="1" fill="#fff"/><rect x="4" y="0" width="1.4" height="1.4" fill="#555"/><rect x="3" y="3" width="1" height="1" fill="#fff"/><rect x="2" y="2" width="1.4" height="1.4" fill="#555"/><rect x="1" y="5" width="1" height="1" fill="#fff"/><rect x="0" y="4" width="1.4" height="1.4" fill="#555"/><rect x="5" y="5" width="1" height="1" fill="#fff"/><rect x="4" y="4" width="1.4" height="1.4" fill="#555"/><rect x="3" y="7" width="1" height="1" fill="#fff"/><rect x="2" y="6" width="1.4" height="1.4" fill="#555"/><rect x="1" y="9" width="1" height="1" fill="#fff"/><rect x="0" y="8" width="1.4" height="1.4" fill="#555"/><rect x="5" y="9" width="1" height="1" fill="#fff"/><rect x="4" y="8" width="1.4" height="1.4" fill="#555"/><rect x="3" y="11" width="1" height="1" fill="#fff"/><rect x="2" y="10" width="1.4" height="1.4" fill="#555"/><rect x="1" y="13" width="1" height="1" fill="#fff"/><rect x="0" y="12" width="1.4" height="1.4" fill="#555"/><rect x="5" y="13" width="1" height="1" fill="#fff"/><rect x="4" y="12" width="1.4" height="1.4" fill="#555"/><rect x="3" y="15" width="1" height="1" fill="#fff"/><rect x="2" y="14" width="1.4" height="1.4" fill="#555"/><rect x="1" y="17" width="1" height="1" fill="#fff"/><rect x="0" y="16" width="1.4" height="1.4" fill="#555"/><rect x="5" y="17" width="1" height="1" fill="#fff"/><rect x="4" y="16" width="1.4" height="1.4" fill="#555"/><rect x="3" y="19" width="1" height="1" fill="#fff"/><rect x="2" y="18" width="1.4" height="1.4" fill="#555"/></svg><svg class="a" style="left:635px;top:1373px" width="6" height="20" viewBox="0 0 6 20"><rect x="1" y="1" width="1" height="1" fill="#fff"/><rect x="0" y="0" width="1.4" height="1.4" fill="#555"/><rect x="5" y="1" width="1" height="1" fill="#fff"/><rect x="4" y="0" width="1.4" height="1.4" fill="#555"/><rect x="3" y="3" width="1" height="1" fill="#fff"/><rect x="2" y="2" width="1.4" height="1.4" fill="#555"/><rect x="1" y="5" width="1" height="1" fill="#fff"/><rect x="0" y="4" width="1.4" height="1.4" fill="#555"/><rect x="5" y="5" width="1" height="1" fill="#fff"/><rect x="4" y="4" width="1.4" height="1.4" fill="#555"/><rect x="3" y="7" width="1" height="1" fill="#fff"/><rect x="2" y="6" width="1.4" height="1.4" fill="#555"/><rect x="1" y="9" width="1" height="1" fill="#fff"/><rect x="0" y="8" width="1.4" height="1.4" fill="#555"/><rect x="5" y="9" width="1" height="1" fill="#fff"/><rect x="4" y="8" width="1.4" height="1.4" fill="#555"/><rect x="3" y="11" width="1" height="1" fill="#fff"/><rect x="2" y="10" width="1.4" height="1.4" fill="#555"/><rect x="1" y="13" width="1" height="1" fill="#fff"/><rect x="0" y="12" width="1.4" height="1.4" fill="#555"/><rect x="5" y="13" width="1" height="1" fill="#fff"/><rect x="4" y="12" width="1.4" height="1.4" fill="#555"/><rect x="3" y="15" width="1" height="1" fill="#fff"/><rect x="2" y="14" width="1.4" height="1.4" fill="#555"/><rect x="1" y="17" width="1" height="1" fill="#fff"/><rect x="0" y="16" width="1.4" height="1.4" fill="#555"/><rect x="5" y="17" width="1" height="1" fill="#fff"/><rect x="4" y="16" width="1.4" height="1.4" fill="#555"/><rect x="3" y="19" width="1" height="1" fill="#fff"/><rect x="2" y="18" width="1.4" height="1.4" fill="#555"/></svg><svg class="a" style="left:1066px;top:1373px" width="6" height="20" viewBox="0 0 6 20"><rect x="1" y="1" width="1" height="1" fill="#fff"/><rect x="0" y="0" width="1.4" height="1.4" fill="#555"/><rect x="5" y="1" width="1" height="1" fill="#fff"/><rect x="4" y="0" width="1.4" height="1.4" fill="#555"/><rect x="3" y="3" width="1" height="1" fill="#fff"/><rect x="2" y="2" width="1.4" height="1.4" fill="#555"/><rect x="1" y="5" width="1" height="1" fill="#fff"/><rect x="0" y="4" width="1.4" height="1.4" fill="#555"/><rect x="5" y="5" width="1" height="1" fill="#fff"/><rect x="4" y="4" width="1.4" height="1.4" fill="#555"/><rect x="3" y="7" width="1" height="1" fill="#fff"/><rect x="2" y="6" width="1.4" height="1.4" fill="#555"/><rect x="1" y="9" width="1" height="1" fill="#fff"/><rect x="0" y="8" width="1.4" height="1.4" fill="#555"/><rect x="5" y="9" width="1" height="1" fill="#fff"/><rect x="4" y="8" width="1.4" height="1.4" fill="#555"/><rect x="3" y="11" width="1" height="1" fill="#fff"/><rect x="2" y="10" width="1.4" height="1.4" fill="#555"/><rect x="1" y="13" width="1" height="1" fill="#fff"/><rect x="0" y="12" width="1.4" height="1.4" fill="#555"/><rect x="5" y="13" width="1" height="1" fill="#fff"/><rect x="4" y="12" width="1.4" height="1.4" fill="#555"/><rect x="3" y="15" width="1" height="1" fill="#fff"/><rect x="2" y="14" width="1.4" height="1.4" fill="#555"/><rect x="1" y="17" width="1" height="1" fill="#fff"/><rect x="0" y="16" width="1.4" height="1.4" fill="#555"/><rect x="5" y="17" width="1" height="1" fill="#fff"/><rect x="4" y="16" width="1.4" height="1.4" fill="#555"/><rect x="3" y="19" width="1" height="1" fill="#fff"/><rect x="2" y="18" width="1.4" height="1.4" fill="#555"/></svg><div class="a" style="left:20px;top:1373px;width:275px;height:20px;background:linear-gradient(#f2f2f2,#dadada);border:1px solid #8a8a8a"></div><div class="a" style="left:28px;top:1377px;width:12px;height:12px;border:2px solid #555;border-top-width:4px;background:#e4e4e4"></div><div class="t" style="left:48px;top:1378px;font-family:'Liberation Mono', monospace;font-size:11.5px;color:#111">inverse_DFT</div><div class="a" style="left:277px;top:1376px;width:1px;height:14px;background:#999"></div><svg class="a" style="left:280px;top:1380px" width="10" height="7" viewBox="0 0 10 7"><polygon points="0,0 10,0 5,6" fill="#111"/></svg><div class="a" style="left:299px;top:1373px;width:20px;height:20px;background:#fff;border:1px solid #8a8a8a"></div><svg class="a" style="left:303px;top:1377px" width="12" height="12" viewBox="0 0 12 12"><rect x="1" y="3" width="8" height="8" fill="none" stroke="#333" stroke-width="1.6"/><path d="M3,1 H11 V9" fill="none" stroke="#333" stroke-width="1.6"/></svg><div class="a" style="left:345px;top:1374px;width:19px;height:19px;background:linear-gradient(#8cb8ff,#2060d0);border:1px solid #555"></div><div class="a" style="left:368px;top:1374px;width:19px;height:19px;background:linear-gradient(#8a8a8a,#2a2a2a);border:1px solid #555"></div><div class="a" style="left:391px;top:1374px;width:19px;height:19px;background:linear-gradient(#8a8a8a,#2a2a2a);border:1px solid #555"></div><div class="a" style="left:414px;top:1374px;width:19px;height:19px;background:linear-gradient(#8a8a8a,#2a2a2a);border:1px solid #555"></div><svg class="a" style="left:1037px;top:1377px" width="11" height="12" viewBox="0 0 11 12"><polygon points="0,0 11,6 0,12" fill="#222"/></svg><div class="t" style="left:1090px;top:1378px;font-family:'Liberation Mono', monospace;font-size:11.67px;color:#111">w:512 · h:512 · n:1 · f32 · Gray · 1.000 MiB</div><svg class="a" style="left:7px;top:55px" width="6" height="22" viewBox="0 0 6 22"><rect x="1" y="1" width="1" height="1" fill="#fff"/><rect x="0" y="0" width="1.4" height="1.4" fill="#555"/><rect x="5" y="1" width="1" height="1" fill="#fff"/><rect x="4" y="0" width="1.4" height="1.4" fill="#555"/><rect x="3" y="3" width="1" height="1" fill="#fff"/><rect x="2" y="2" width="1.4" height="1.4" fill="#555"/><rect x="1" y="5" width="1" height="1" fill="#fff"/><rect x="0" y="4" width="1.4" height="1.4" fill="#555"/><rect x="5" y="5" width="1" height="1" fill="#fff"/><rect x="4" y="4" width="1.4" height="1.4" fill="#555"/><rect x="3" y="7" width="1" height="1" fill="#fff"/><rect x="2" y="6" width="1.4" height="1.4" fill="#555"/><rect x="1" y="9" width="1" height="1" fill="#fff"/><rect x="0" y="8" width="1.4" height="1.4" fill="#555"/><rect x="5" y="9" width="1" height="1" fill="#fff"/><rect x="4" y="8" width="1.4" height="1.4" fill="#555"/><rect x="3" y="11" width="1" height="1" fill="#fff"/><rect x="2" y="10" width="1.4" height="1.4" fill="#555"/><rect x="1" y="13" width="1" height="1" fill="#fff"/><rect x="0" y="12" width="1.4" height="1.4" fill="#555"/><rect x="5" y="13" width="1" height="1" fill="#fff"/><rect x="4" y="12" width="1.4" height="1.4" fill="#555"/><rect x="3" y="15" width="1" height="1" fill="#fff"/><rect x="2" y="14" width="1.4" height="1.4" fill="#555"/><rect x="1" y="17" width="1" height="1" fill="#fff"/><rect x="0" y="16" width="1.4" height="1.4" fill="#555"/><rect x="5" y="17" width="1" height="1" fill="#fff"/><rect x="4" y="16" width="1.4" height="1.4" fill="#555"/><rect x="3" y="19" width="1" height="1" fill="#fff"/><rect x="2" y="18" width="1.4" height="1.4" fill="#555"/><rect x="1" y="21" width="1" height="1" fill="#fff"/><rect x="0" y="20" width="1.4" height="1.4" fill="#555"/><rect x="5" y="21" width="1" height="1" fill="#fff"/><rect x="4" y="20" width="1.4" height="1.4" fill="#555"/></svg><svg class="a" style="left:7px;top:88px" width="6" height="22" viewBox="0 0 6 22"><rect x="1" y="1" width="1" height="1" fill="#fff"/><rect x="0" y="0" width="1.4" height="1.4" fill="#555"/><rect x="5" y="1" width="1" height="1" fill="#fff"/><rect x="4" y="0" width="1.4" height="1.4" fill="#555"/><rect x="3" y="3" width="1" height="1" fill="#fff"/><rect x="2" y="2" width="1.4" height="1.4" fill="#555"/><rect x="1" y="5" width="1" height="1" fill="#fff"/><rect x="0" y="4" width="1.4" height="1.4" fill="#555"/><rect x="5" y="5" width="1" height="1" fill="#fff"/><rect x="4" y="4" width="1.4" height="1.4" fill="#555"/><rect x="3" y="7" width="1" height="1" fill="#fff"/><rect x="2" y="6" width="1.4" height="1.4" fill="#555"/><rect x="1" y="9" width="1" height="1" fill="#fff"/><rect x="0" y="8" width="1.4" height="1.4" fill="#555"/><rect x="5" y="9" width="1" height="1" fill="#fff"/><rect x="4" y="8" width="1.4" height="1.4" fill="#555"/><rect x="3" y="11" width="1" height="1" fill="#fff"/><rect x="2" y="10" width="1.4" height="1.4" fill="#555"/><rect x="1" y="13" width="1" height="1" fill="#fff"/><rect x="0" y="12" width="1.4" height="1.4" fill="#555"/><rect x="5" y="13" width="1" height="1" fill="#fff"/><rect x="4" y="12" width="1.4" height="1.4" fill="#555"/><rect x="3" y="15" width="1" height="1" fill="#fff"/><rect x="2" y="14" width="1.4" height="1.4" fill="#555"/><rect x="1" y="17" width="1" height="1" fill="#fff"/><rect x="0" y="16" width="1.4" height="1.4" fill="#555"/><rect x="5" y="17" width="1" height="1" fill="#fff"/><rect x="4" y="16" width="1.4" height="1.4" fill="#555"/><rect x="3" y="19" width="1" height="1" fill="#fff"/><rect x="2" y="18" width="1.4" height="1.4" fill="#555"/><rect x="1" y="21" width="1" height="1" fill="#fff"/><rect x="0" y="20" width="1.4" height="1.4" fill="#555"/><rect x="5" y="21" width="1" height="1" fill="#fff"/><rect x="4" y="20" width="1.4" height="1.4" fill="#555"/></svg><svg class="a" style="left:26px;top:58px" width="16" height="16" viewBox="0 0 16 16"><polygon points="0,5 2.5,5 8.8,11.2 6.8,14 0,14" fill="#1060c0"/><path d="M4.5,10.5 C7,6 9.5,5.2 11,5.2 C13.5,5.2 14.6,7.5 14.6,9.5 L13.8,14" fill="none" stroke="#1060c0" stroke-width="2.8"/></svg><svg class="a" style="left:59px;top:58px" width="16" height="16" viewBox="0 0 16 16"><polygon points="15.8,5 13.3,5 7,11.2 9,14 15.8,14" fill="#8c8c8c"/><path d="M11.3,10.5 C8.8,6 6.3,5.2 4.8,5.2 C2.3,5.2 1.2,7.5 1.2,9.5 L2,14" fill="none" stroke="#8c8c8c" stroke-width="2.8"/></svg><div class="a" style="left:89px;top:54px;width:1px;height:25px;background:#a0a0a0"></div><svg class="a" style="left:102px;top:58px" width="16" height="16" viewBox="0 0 16 16"><rect x="0.5" y="4.5" width="10" height="6" fill="#fff" stroke="#444"/><rect x="2" y="6" width="5" height="3" fill="#1060c0"/><path d="M11,1 H14 M12.5,1 V15 M11,15 H14" stroke="#444" stroke-width="1.2" fill="none"/></svg><svg class="a" style="left:135px;top:58px" width="16" height="16" viewBox="0 0 16 16"><rect x="4.5" y="0.5" width="11" height="9" fill="#fff" stroke="#444"/><rect x="4" y="0" width="12" height="2.5" fill="#1060c0"/><rect x="0.5" y="5.5" width="10" height="10" fill="#fff" stroke="#444"/><rect x="0" y="5" width="11" height="2.5" fill="#1060c0"/><circle cx="11.5" cy="11.5" r="4.5" fill="#1aa060"/><path d="M11.5,9 V14 M9,11.5 H14" stroke="#fff" stroke-width="1.5"/></svg><svg class="a" style="left:168px;top:58px" width="16" height="16" viewBox="0 0 16 16"><defs><linearGradient id="gg168" x1="0" x2="1"><stop offset="0" stop-color="#666"/><stop offset="1" stop-color="#aaa"/></linearGradient></defs><rect x="0" y="2" width="12" height="13" fill="url(#gg168)"/><rect x="8.5" y="5.5" width="7" height="8" fill="#ddd" stroke="#666"/></svg><svg class="a" style="left:201px;top:58px" width="16" height="16" viewBox="0 0 16 16"><defs><linearGradient id="gg201" x1="0" x2="1"><stop offset="0" stop-color="#666"/><stop offset="1" stop-color="#aaa"/></linearGradient></defs><rect x="0" y="2" width="12" height="13" fill="url(#gg201)"/><rect x="8.5" y="5.5" width="7" height="8" fill="#ddd" stroke="#666"/></svg><div class="a" style="left:231px;top:54px;width:1px;height:25px;background:#a0a0a0"></div><svg class="a" style="left:244px;top:58px" width="16" height="16" viewBox="0 0 16 16"><rect x="0.5" y="1.5" width="15" height="14" fill="#fff" stroke="#444"/><rect x="0" y="1" width="16" height="2.5" fill="#1060c0"/><circle cx="11.5" cy="11.5" r="4.5" fill="#1aa060"/><path d="M11.5,9 V14 M9,11.5 H14" stroke="#fff" stroke-width="1.5"/></svg><svg class="a" style="left:276px;top:55px" width="6" height="22" viewBox="0 0 6 22"><rect x="1" y="1" width="1" height="1" fill="#fff"/><rect x="0" y="0" width="1.4" height="1.4" fill="#555"/><rect x="5" y="1" width="1" height="1" fill="#fff"/><rect x="4" y="0" width="1.4" height="1.4" fill="#555"/><rect x="3" y="3" width="1" height="1" fill="#fff"/><rect x="2" y="2" width="1.4" height="1.4" fill="#555"/><rect x="1" y="5" width="1" height="1" fill="#fff"/><rect x="0" y="4" width="1.4" height="1.4" fill="#555"/><rect x="5" y="5" width="1" height="1" fill="#fff"/><rect x="4" y="4" width="1.4" height="1.4" fill="#555"/><rect x="3" y="7" width="1" height="1" fill="#fff"/><rect x="2" y="6" width="1.4" height="1.4" fill="#555"/><rect x="1" y="9" width="1" height="1" fill="#fff"/><rect x="0" y="8" width="1.4" height="1.4" fill="#555"/><rect x="5" y="9" width="1" height="1" fill="#fff"/><rect x="4" y="8" width="1.4" height="1.4" fill="#555"/><rect x="3" y="11" width="1" height="1" fill="#fff"/><rect x="2" y="10" width="1.4" height="1.4" fill="#555"/><rect x="1" y="13" width="1" height="1" fill="#fff"/><rect x="0" y="12" width="1.4" height="1.4" fill="#555"/><rect x="5" y="13" width="1" height="1" fill="#fff"/><rect x="4" y="12" width="1.4" height="1.4" fill="#555"/><rect x="3" y="15" width="1" height="1" fill="#fff"/><rect x="2" y="14" width="1.4" height="1.4" fill="#555"/><rect x="1" y="17" width="1" height="1" fill="#fff"/><rect x="0" y="16" width="1.4" height="1.4" fill="#555"/><rect x="5" y="17" width="1" height="1" fill="#fff"/><rect x="4" y="16" width="1.4" height="1.4" fill="#555"/><rect x="3" y="19" width="1" height="1" fill="#fff"/><rect x="2" y="18" width="1.4" height="1.4" fill="#555"/><rect x="1" y="21" width="1" height="1" fill="#fff"/><rect x="0" y="20" width="1.4" height="1.4" fill="#555"/><rect x="5" y="21" width="1" height="1" fill="#fff"/><rect x="4" y="20" width="1.4" height="1.4" fill="#555"/></svg><div class="a" style="left:289px;top:55px;width:184px;height:22px;background:linear-gradient(#f6f6f6,#d8d8d8);border:1px solid #8a8a8a"></div><div class="a" style="left:297px;top:60px;width:12px;height:12px;background:#c8c8c8;border:1.5px solid #222"></div><div class="t" style="left:317px;top:61px;font-size:12.5px;color:#111">Gray</div><div class="a" style="left:455px;top:58px;width:1px;height:16px;background:#aaa"></div><svg class="a" style="left:458px;top:63px" width="10" height="7" viewBox="0 0 10 7"><polygon points="0,0 10,0 5,6" fill="#111"/></svg><svg class="a" style="left:482px;top:55px" width="6" height="22" viewBox="0 0 6 22"><rect x="1" y="1" width="1" height="1" fill="#fff"/><rect x="0" y="0" width="1.4" height="1.4" fill="#555"/><rect x="5" y="1" width="1" height="1" fill="#fff"/><rect x="4" y="0" width="1.4" height="1.4" fill="#555"/><rect x="3" y="3" width="1" height="1" fill="#fff"/><rect x="2" y="2" width="1.4" height="1.4" fill="#555"/><rect x="1" y="5" width="1" height="1" fill="#fff"/><rect x="0" y="4" width="1.4" height="1.4" fill="#555"/><rect x="5" y="5" width="1" height="1" fill="#fff"/><rect x="4" y="4" width="1.4" height="1.4" fill="#555"/><rect x="3" y="7" width="1" height="1" fill="#fff"/><rect x="2" y="6" width="1.4" height="1.4" fill="#555"/><rect x="1" y="9" width="1" height="1" fill="#fff"/><rect x="0" y="8" width="1.4" height="1.4" fill="#555"/><rect x="5" y="9" width="1" height="1" fill="#fff"/><rect x="4" y="8" width="1.4" height="1.4" fill="#555"/><rect x="3" y="11" width="1" height="1" fill="#fff"/><rect x="2" y="10" width="1.4" height="1.4" fill="#555"/><rect x="1" y="13" width="1" height="1" fill="#fff"/><rect x="0" y="12" width="1.4" height="1.4" fill="#555"/><rect x="5" y="13" width="1" height="1" fill="#fff"/><rect x="4" y="12" width="1.4" height="1.4" fill="#555"/><rect x="3" y="15" width="1" height="1" fill="#fff"/><rect x="2" y="14" width="1.4" height="1.4" fill="#555"/><rect x="1" y="17" width="1" height="1" fill="#fff"/><rect x="0" y="16" width="1.4" height="1.4" fill="#555"/><rect x="5" y="17" width="1" height="1" fill="#fff"/><rect x="4" y="16" width="1.4" height="1.4" fill="#555"/><rect x="3" y="19" width="1" height="1" fill="#fff"/><rect x="2" y="18" width="1.4" height="1.4" fill="#555"/><rect x="1" y="21" width="1" height="1" fill="#fff"/><rect x="0" y="20" width="1.4" height="1.4" fill="#555"/><rect x="5" y="21" width="1" height="1" fill="#fff"/><rect x="4" y="20" width="1.4" height="1.4" fill="#555"/></svg><svg class="a" style="left:501px;top:58px" width="16" height="16" viewBox="0 0 16 16"><path d="M0,8 H16 M8,0 V16" stroke="#444" stroke-width="2"/><rect x="4.75" y="4.75" width="6.5" height="6.5" fill="#fff" stroke="#444" stroke-width="1.5"/><path d="M8,4.5 V11.5 M4.5,8 H11.5" stroke="#444" stroke-width="1.5"/></svg><svg class="a" style="left:534px;top:58px" width="16" height="16" viewBox="0 0 16 16"><g fill="#444"><polygon points="1,1 7,1 1,7"/><polygon points="15,1 9,1 15,7"/><polygon points="1,15 7,15 1,9"/><polygon points="15,15 9,15 15,9"/></g><path d="M3,3 L6.8,6.8 M13,3 L9.2,6.8 M3,13 L6.8,9.2 M13,13 L9.2,9.2" stroke="#444" stroke-width="2"/><rect x="7" y="7" width="2" height="2" fill="none" stroke="#444" stroke-width="1"/></svg><svg class="a" style="left:567px;top:58px" width="16" height="16" viewBox="0 0 16 16"><g fill="#444"><polygon points="6.5,6.5 6.5,1 1,6.5"/><polygon points="9.5,6.5 9.5,1 15,6.5"/><polygon points="6.5,9.5 6.5,15 1,9.5"/><polygon points="9.5,9.5 9.5,15 15,9.5"/></g><path d="M1,1 L4.5,4.5 M15,1 L11.5,4.5 M1,15 L4.5,11.5 M15,15 L11.5,11.5" stroke="#444" stroke-width="2" stroke-linecap="round"/><rect x="7" y="7" width="2" height="2" fill="none" stroke="#444" stroke-width="1"/></svg><svg class="a" style="left:600px;top:58px" width="16" height="16" viewBox="0 0 16 16"><path d="M8,2 V6.8 M8,9.2 V14 M2,8 H6.8 M9.2,8 H14" stroke="#444" stroke-width="2"/><g fill="#444"><polygon points="8,0 11.8,4.3 8,3.2 4.2,4.3"/><polygon points="8,16 11.8,11.7 8,12.8 4.2,11.7"/><polygon points="0,8 4.3,4.2 3.2,8 4.3,11.8"/><polygon points="16,8 11.7,4.2 12.8,8 11.7,11.8"/></g><rect x="7" y="7" width="2" height="2" fill="none" stroke="#444" stroke-width="1"/></svg><svg class="a" style="left:633px;top:58px" width="16" height="16" viewBox="0 0 16 16"><polygon points="8,0 16,8 8,16 0,8" fill="#444"/><rect x="5" y="5" width="2.5" height="2.5" fill="#fff"/><rect x="8.5" y="5" width="2.5" height="2.5" fill="#fff"/><rect x="5" y="8.5" width="2.5" height="2.5" fill="#fff"/><rect x="8.5" y="8.5" width="2.5" height="2.5" fill="#fff"/></svg><svg class="a" style="left:666px;top:58px" width="16" height="16" viewBox="0 0 16 16"><polygon points="0,15 0,5 5,1 5,15" fill="#444"/><rect x="5.5" y="1.5" width="10" height="13" fill="#fff" stroke="#444"/></svg><svg class="a" style="left:699px;top:58px" width="16" height="16" viewBox="0 0 16 16"><polygon points="0,15 0,5 5,1 5,15" fill="#444"/><rect x="5.5" y="1.5" width="10" height="13" fill="#fff" stroke="#444"/><polygon points="7,4 14,10 10.5,10 12,14 10.5,14.5 9,11 7,13" fill="#888"/></svg><div class="a" style="left:726px;top:52px;width:29px;height:29px;background:#fbfbfb;border:1px solid #7a7a7a"></div><svg class="a" style="left:732px;top:58px" width="15" height="15" viewBox="0 0 15 15"><defs><radialGradient id="tcs1" cx="0.3" cy="0.3" r="0.7"><stop offset="0" stop-color="#6a6aff"/><stop offset="1" stop-color="#1010d0"/></radialGradient><radialGradient id="tcs2" cx="0.6" cy="0.7" r="0.7"><stop offset="0" stop-color="#e0a0ff"/><stop offset="1" stop-color="#8020e0"/></radialGradient></defs><rect width="15" height="15" fill="#2a9a3a"/><circle cx="6" cy="6" r="5" fill="url(#tcs1)"/><circle cx="10" cy="10" r="5" fill="url(#tcs2)"/></svg><svg class="a" style="left:763px;top:55px" width="6" height="22" viewBox="0 0 6 22"><rect x="1" y="1" width="1" height="1" fill="#fff"/><rect x="0" y="0" width="1.4" height="1.4" fill="#555"/><rect x="5" y="1" width="1" height="1" fill="#fff"/><rect x="4" y="0" width="1.4" height="1.4" fill="#555"/><rect x="3" y="3" width="1" height="1" fill="#fff"/><rect x="2" y="2" width="1.4" height="1.4" fill="#555"/><rect x="1" y="5" width="1" height="1" fill="#fff"/><rect x="0" y="4" width="1.4" height="1.4" fill="#555"/><rect x="5" y="5" width="1" height="1" fill="#fff"/><rect x="4" y="4" width="1.4" height="1.4" fill="#555"/><rect x="3" y="7" width="1" height="1" fill="#fff"/><rect x="2" y="6" width="1.4" height="1.4" fill="#555"/><rect x="1" y="9" width="1" height="1" fill="#fff"/><rect x="0" y="8" width="1.4" height="1.4" fill="#555"/><rect x="5" y="9" width="1" height="1" fill="#fff"/><rect x="4" y="8" width="1.4" height="1.4" fill="#555"/><rect x="3" y="11" width="1" height="1" fill="#fff"/><rect x="2" y="10" width="1.4" height="1.4" fill="#555"/><rect x="1" y="13" width="1" height="1" fill="#fff"/><rect x="0" y="12" width="1.4" height="1.4" fill="#555"/><rect x="5" y="13" width="1" height="1" fill="#fff"/><rect x="4" y="12" width="1.4" height="1.4" fill="#555"/><rect x="3" y="15" width="1" height="1" fill="#fff"/><rect x="2" y="14" width="1.4" height="1.4" fill="#555"/><rect x="1" y="17" width="1" height="1" fill="#fff"/><rect x="0" y="16" width="1.4" height="1.4" fill="#555"/><rect x="5" y="17" width="1" height="1" fill="#fff"/><rect x="4" y="16" width="1.4" height="1.4" fill="#555"/><rect x="3" y="19" width="1" height="1" fill="#fff"/><rect x="2" y="18" width="1.4" height="1.4" fill="#555"/><rect x="1" y="21" width="1" height="1" fill="#fff"/><rect x="0" y="20" width="1.4" height="1.4" fill="#555"/><rect x="5" y="21" width="1" height="1" fill="#fff"/><rect x="4" y="20" width="1.4" height="1.4" fill="#555"/></svg><svg class="a" style="left:783px;top:58px" width="16" height="16" viewBox="0 0 16 16"><circle cx="6.5" cy="6.5" r="5.2" fill="none" stroke="#444" stroke-width="2"/><path d="M10.5,10.5 L15,15" stroke="#444" stroke-width="2.6"/><path d="M6.5,3.5 V9.5 M3.5,6.5 H9.5" stroke="#1060c0" stroke-width="1.8"/></svg><svg class="a" style="left:816px;top:58px" width="16" height="16" viewBox="0 0 16 16"><circle cx="6.5" cy="6.5" r="5.2" fill="none" stroke="#444" stroke-width="2"/><path d="M10.5,10.5 L15,15" stroke="#444" stroke-width="2.6"/><path d="M3.5,6.5 H9.5" stroke="#1060c0" stroke-width="1.8"/></svg><div class="a" style="left:846px;top:54px;width:1px;height:25px;background:#a0a0a0"></div><svg class="a" style="left:859px;top:58px" width="16" height="16" viewBox="0 0 16 16"><circle cx="6.5" cy="6.5" r="5.2" fill="none" stroke="#444" stroke-width="2"/><path d="M10.5,10.5 L15,15" stroke="#444" stroke-width="2.6"/><rect x="5" y="5" width="3" height="3" fill="#1060c0"/></svg><svg class="a" style="left:892px;top:58px" width="16" height="16" viewBox="0 0 16 16"><circle cx="6.5" cy="6.5" r="5.2" fill="none" stroke="#444" stroke-width="2"/><path d="M10.5,10.5 L15,15" stroke="#444" stroke-width="2.6"/><rect x="4" y="6.5" width="2" height="2" fill="#1060c0"/><rect x="7" y="6.5" width="2" height="2" fill="#1060c0"/><rect x="7" y="3.5" width="2" height="2" fill="#1060c0"/></svg><svg class="a" style="left:925px;top:58px" width="16" height="16" viewBox="0 0 16 16"><circle cx="6.5" cy="6.5" r="5.2" fill="none" stroke="#444" stroke-width="2"/><path d="M10.5,10.5 L15,15" stroke="#444" stroke-width="2.6"/><rect x="4" y="3.5" width="2" height="2" fill="#1060c0"/><rect x="4" y="6.5" width="2" height="2" fill="#1060c0"/><rect x="7" y="6.5" width="2" height="2" fill="#1060c0"/></svg><div class="a" style="left:955px;top:54px;width:1px;height:25px;background:#a0a0a0"></div><svg class="a" style="left:968px;top:58px" width="16" height="16" viewBox="0 0 16 16"><rect x="0.5" y="0.5" width="15" height="15" fill="none" stroke="#444" stroke-dasharray="2,2"/><rect x="3.5" y="3.5" width="9" height="9" fill="#fff" stroke="#444"/><rect x="3" y="3" width="10" height="2.5" fill="#1060c0"/></svg><svg class="a" style="left:1001px;top:58px" width="16" height="16" viewBox="0 0 16 16"><rect x="0.5" y="0.5" width="15" height="15" fill="none" stroke="#444" stroke-dasharray="2,2"/><rect x="2.5" y="2.5" width="8" height="7" fill="#fff" stroke="#444"/><rect x="5.5" y="5.5" width="8" height="8" fill="#fff" stroke="#444"/><rect x="5" y="5" width="9" height="2.5" fill="#1060c0"/></svg><svg class="a" style="left:1034px;top:58px" width="16" height="16" viewBox="0 0 16 16"><rect x="0.5" y="1.5" width="15" height="14" fill="#fff" stroke="#444"/><rect x="0" y="1" width="16" height="2.5" fill="#1060c0"/><path d="M9,9 L14,14 M14,10 V14 H10" stroke="#1060c0" stroke-width="1.5" fill="none"/></svg><div class="a" style="left:1064px;top:54px;width:1px;height:25px;background:#a0a0a0"></div><svg class="a" style="left:1077px;top:58px" width="16" height="16" viewBox="0 0 16 16"><rect x="0.5" y="1.5" width="15" height="14" fill="#fff" stroke="#444"/><rect x="0" y="1" width="16" height="2.5" fill="#1060c0"/><path d="M0.5,9.5 H8.5 V15.5" fill="none" stroke="#444"/><path d="M9,9 L14,4 M10,4 H14 V8" stroke="#1060c0" stroke-width="1.5" fill="none"/></svg><svg class="a" style="left:1110px;top:58px" width="16" height="16" viewBox="0 0 16 16"><path d="M0.5,4 V0.5 H4 M12,0.5 H15.5 V4 M15.5,12 V15.5 H12 M4,15.5 H0.5 V12" fill="none" stroke="#444"/><rect x="2.5" y="2.5" width="11" height="11" fill="#fff" stroke="#444"/><rect x="2" y="2" width="12" height="2.5" fill="#1060c0"/></svg><svg class="a" style="left:1141px;top:55px" width="6" height="22" viewBox="0 0 6 22"><rect x="1" y="1" width="1" height="1" fill="#fff"/><rect x="0" y="0" width="1.4" height="1.4" fill="#555"/><rect x="5" y="1" width="1" height="1" fill="#fff"/><rect x="4" y="0" width="1.4" height="1.4" fill="#555"/><rect x="3" y="3" width="1" height="1" fill="#fff"/><rect x="2" y="2" width="1.4" height="1.4" fill="#555"/><rect x="1" y="5" width="1" height="1" fill="#fff"/><rect x="0" y="4" width="1.4" height="1.4" fill="#555"/><rect x="5" y="5" width="1" height="1" fill="#fff"/><rect x="4" y="4" width="1.4" height="1.4" fill="#555"/><rect x="3" y="7" width="1" height="1" fill="#fff"/><rect x="2" y="6" width="1.4" height="1.4" fill="#555"/><rect x="1" y="9" width="1" height="1" fill="#fff"/><rect x="0" y="8" width="1.4" height="1.4" fill="#555"/><rect x="5" y="9" width="1" height="1" fill="#fff"/><rect x="4" y="8" width="1.4" height="1.4" fill="#555"/><rect x="3" y="11" width="1" height="1" fill="#fff"/><rect x="2" y="10" width="1.4" height="1.4" fill="#555"/><rect x="1" y="13" width="1" height="1" fill="#fff"/><rect x="0" y="12" width="1.4" height="1.4" fill="#555"/><rect x="5" y="13" width="1" height="1" fill="#fff"/><rect x="4" y="12" width="1.4" height="1.4" fill="#555"/><rect x="3" y="15" width="1" height="1" fill="#fff"/><rect x="2" y="14" width="1.4" height="1.4" fill="#555"/><rect x="1" y="17" width="1" height="1" fill="#fff"/><rect x="0" y="16" width="1.4" height="1.4" fill="#555"/><rect x="5" y="17" width="1" height="1" fill="#fff"/><rect x="4" y="16" width="1.4" height="1.4" fill="#555"/><rect x="3" y="19" width="1" height="1" fill="#fff"/><rect x="2" y="18" width="1.4" height="1.4" fill="#555"/><rect x="1" y="21" width="1" height="1" fill="#fff"/><rect x="0" y="20" width="1.4" height="1.4" fill="#555"/><rect x="5" y="21" width="1" height="1" fill="#fff"/><rect x="4" y="20" width="1.4" height="1.4" fill="#555"/></svg><svg class="a" style="left:1161px;top:58px" width="16" height="16" viewBox="0 0 16 16"><polygon points="0,15 0,6 5,1 5,15" fill="#444"/><rect x="5.5" y="1.5" width="10" height="13" fill="#fff" stroke="#444"/><circle cx="11.5" cy="11.5" r="4.5" fill="#1aa060"/><path d="M11.5,9 V14 M9,11.5 H14" stroke="#fff" stroke-width="1.5"/></svg><svg class="a" style="left:1194px;top:58px" width="16" height="16" viewBox="0 0 16 16"><polygon points="0,15 0,6 5,1 5,15" fill="#8c8c8c"/><rect x="5.5" y="1.5" width="10" height="13" fill="#fff" stroke="#8c8c8c"/><path d="M6,14 L14,6" stroke="#8c8c8c" stroke-width="2.5"/></svg><svg class="a" style="left:1227px;top:58px" width="16" height="16" viewBox="0 0 16 16"><polygon points="0,15 0,6 5,1 5,15" fill="#8c8c8c"/><rect x="5.5" y="1.5" width="10" height="13" fill="#fff" stroke="#8c8c8c"/><circle cx="11.5" cy="11.5" r="4.5" fill="#8c8c8c"/><path d="M11.5,9 V14 M9,11.5 H14" stroke="#fff" stroke-width="1.5"/></svg><svg class="a" style="left:1260px;top:58px" width="16" height="16" viewBox="0 0 16 16"><polygon points="0,9 5,1 5,9" fill="#8c8c8c"/><rect x="0.5" y="9.5" width="7" height="5" fill="#fff" stroke="#8c8c8c"/><rect x="5.5" y="1.5" width="10" height="9" fill="#fff" stroke="#8c8c8c"/><circle cx="11.5" cy="11.5" r="4.5" fill="#8c8c8c"/><path d="M11.5,9 V14 M9,11.5 H14" stroke="#fff" stroke-width="1.5"/></svg><div class="a" style="left:1290px;top:54px;width:1px;height:25px;background:#a0a0a0"></div><div class="a" style="left:1297px;top:52px;width:29px;height:29px;background:#fbfbfb;border:1px solid #7a7a7a"></div><svg class="a" style="left:1303px;top:58px" width="16" height="16" viewBox="0 0 16 16"><polygon points="0,15 0,6 5,1 5,15" fill="#333"/><rect x="5.5" y="1.5" width="10" height="13" fill="#fff" stroke="#333"/><circle cx="11" cy="9" r="3.2" fill="#fff" stroke="#1060c0" stroke-width="1.6"/><path d="M8.8,11.2 L6,14" stroke="#1060c0" stroke-width="2"/></svg><div class="a" style="left:1334px;top:54px;width:1px;height:25px;background:#a0a0a0"></div><svg class="a" style="left:1346px;top:58px" width="16" height="16" viewBox="0 0 16 16"><polygon points="0,15 0,6 5,1 5,15" fill="#8c8c8c"/><rect x="5.5" y="1.5" width="10" height="13" fill="#fff" stroke="#8c8c8c"/><path d="M11,5 V13 M8,10 L11,13.5 L14,10" stroke="#8c8c8c" stroke-width="2" fill="none"/></svg><svg class="a" style="left:1379px;top:58px" width="16" height="16" viewBox="0 0 16 16"><polygon points="0,15 0,6 5,1 5,15" fill="#8c8c8c"/><rect x="5.5" y="1.5" width="10" height="13" fill="#fff" stroke="#8c8c8c"/><path d="M11,15 V7 M8,10 L11,6.5 L14,10" stroke="#8c8c8c" stroke-width="2" fill="none"/></svg><div class="a" style="left:1409px;top:54px;width:1px;height:25px;background:#a0a0a0"></div><svg class="a" style="left:1422px;top:58px" width="16" height="16" viewBox="0 0 16 16"><polygon points="0,15 0,6 5,1 5,15" fill="#8c8c8c"/><rect x="5.5" y="1.5" width="10" height="13" fill="#fff" stroke="#8c8c8c"/><path d="M8,9 C8,5 14,5 14,9 C14,12 11,13 9,12" stroke="#8c8c8c" stroke-width="1.8" fill="none"/><polygon points="6,7 10,8 7,11" fill="#8c8c8c"/></svg><div class="a" style="left:1452px;top:54px;width:1px;height:25px;background:#a0a0a0"></div><svg class="a" style="left:1465px;top:58px" width="16" height="16" viewBox="0 0 16 16"><polygon points="0,15 0,6 5,1 5,15" fill="#8c8c8c"/><rect x="5.5" y="1.5" width="10" height="13" fill="#fff" stroke="#8c8c8c"/><circle cx="11.5" cy="11" r="3" fill="none" stroke="#8c8c8c" stroke-width="2.2"/><path d="M11.5,6.5 V15.5 M7,11 H16" stroke="#8c8c8c" stroke-width="1.6"/></svg><svg class="a" style="left:1498px;top:58px" width="16" height="16" viewBox="0 0 16 16"><polygon points="0,15 0,6 5,1 5,15" fill="#8c8c8c"/><rect x="5.5" y="1.5" width="10" height="13" fill="#fff" stroke="#8c8c8c"/><path d="M14,9 A3.5,3.5 0 1 1 11,6.5" stroke="#8c8c8c" stroke-width="2" fill="none"/><polygon points="10,4 14,6.5 10,9" fill="#8c8c8c"/></svg><svg class="a" style="left:1531px;top:58px" width="16" height="16" viewBox="0 0 16 16"><polygon points="0,15 0,6 5,1 5,15" fill="#8c8c8c"/><rect x="5.5" y="1.5" width="10" height="13" fill="#fff" stroke="#8c8c8c"/><circle cx="11.5" cy="11.5" r="4.5" fill="#8c8c8c"/><path d="M9.5,9.5 L13.5,13.5 M13.5,9.5 L9.5,13.5" stroke="#fff" stroke-width="1.5"/></svg><svg class="a" style="left:26px;top:91px" width="16" height="16" viewBox="0 0 16 16"><defs><pattern id="pc26" width="2" height="2" patternUnits="userSpaceOnUse"><rect width="1" height="1" fill="#333"/><rect x="1" y="1" width="1" height="1" fill="#333"/></pattern></defs><rect x="0.5" y="1.5" width="15" height="14" fill="#fff" stroke="#444"/><rect x="1" y="3" width="7" height="12" fill="url(#pc26)"/><rect x="0" y="1" width="16" height="2.5" fill="#1060c0"/></svg><svg class="a" style="left:59px;top:91px" width="16" height="16" viewBox="0 0 16 16"><defs><pattern id="pg59" width="2" height="2" patternUnits="userSpaceOnUse"><rect width="2" height="2" fill="#ddd"/><rect width="1" height="1" fill="#999"/><rect x="1" y="1" width="1" height="1" fill="#999"/></pattern></defs><rect x="0" y="1" width="16" height="14" fill="url(#pg59)"/><rect x="0" y="1" width="16" height="2.5" fill="#8c8c8c"/><rect x="8" y="3.5" width="8" height="11.5" fill="#fff"/><circle cx="11.5" cy="11" r="4.3" fill="#8c8c8c"/><path d="M9.5,9 L13.5,13 M13.5,9 L9.5,13" stroke="#fff" stroke-width="1.5"/></svg><div class="a" style="left:89px;top:87px;width:1px;height:25px;background:#a0a0a0"></div><svg class="a" style="left:102px;top:91px" width="16" height="16" viewBox="0 0 16 16"><defs><pattern id="pg102" width="2" height="2" patternUnits="userSpaceOnUse"><rect width="2" height="2" fill="#ddd"/><rect width="1" height="1" fill="#999"/><rect x="1" y="1" width="1" height="1" fill="#999"/></pattern></defs><rect x="0" y="1" width="16" height="14" fill="url(#pg102)"/><rect x="0" y="1" width="16" height="2.5" fill="#8c8c8c"/><rect x="8" y="3.5" width="8" height="11.5" fill="#fff"/><circle cx="11.5" cy="11" r="4.3" fill="#8c8c8c"/><path d="M9.5,12.5 L13,9.5" stroke="#fff" stroke-width="1.5"/></svg><svg class="a" style="left:135px;top:91px" width="16" height="16" viewBox="0 0 16 16"><defs><pattern id="pg135" width="2" height="2" patternUnits="userSpaceOnUse"><rect width="2" height="2" fill="#ddd"/><rect width="1" height="1" fill="#999"/><rect x="1" y="1" width="1" height="1" fill="#999"/></pattern></defs><rect x="0" y="1" width="16" height="14" fill="url(#pg135)"/><rect x="0" y="1" width="16" height="2.5" fill="#8c8c8c"/><rect x="8" y="3.5" width="8" height="11.5" fill="#fff"/><circle cx="11.5" cy="11" r="4.3" fill="#8c8c8c"/><path d="M9.3,11 L11,12.8 L13.8,9.3" stroke="#fff" stroke-width="1.5" fill="none"/></svg><svg class="a" style="left:168px;top:91px" width="16" height="16" viewBox="0 0 16 16"><defs><pattern id="pg168" width="2" height="2" patternUnits="userSpaceOnUse"><rect width="2" height="2" fill="#ddd"/><rect width="1" height="1" fill="#999"/><rect x="1" y="1" width="1" height="1" fill="#999"/></pattern></defs><rect x="0" y="1" width="16" height="14" fill="url(#pg168)"/><rect x="0" y="1" width="16" height="2.5" fill="#8c8c8c"/><rect x="8" y="3.5" width="8" height="11.5" fill="#fff"/><circle cx="12" cy="9.5" r="3" fill="#fff" stroke="#8c8c8c" stroke-width="1.6"/><path d="M9.8,11.7 L7.5,14.5" stroke="#8c8c8c" stroke-width="2"/></svg><svg class="a" style="left:199px;top:88px" width="6" height="22" viewBox="0 0 6 22"><rect x="1" y="1" width="1" height="1" fill="#fff"/><rect x="0" y="0" width="1.4" height="1.4" fill="#555"/><rect x="5" y="1" width="1" height="1" fill="#fff"/><rect x="4" y="0" width="1.4" height="1.4" fill="#555"/><rect x="3" y="3" width="1" height="1" fill="#fff"/><rect x="2" y="2" width="1.4" height="1.4" fill="#555"/><rect x="1" y="5" width="1" height="1" fill="#fff"/><rect x="0" y="4" width="1.4" height="1.4" fill="#555"/><rect x="5" y="5" width="1" height="1" fill="#fff"/><rect x="4" y="4" width="1.4" height="1.4" fill="#555"/><rect x="3" y="7" width="1" height="1" fill="#fff"/><rect x="2" y="6" width="1.4" height="1.4" fill="#555"/><rect x="1" y="9" width="1" height="1" fill="#fff"/><rect x="0" y="8" width="1.4" height="1.4" fill="#555"/><rect x="5" y="9" width="1" height="1" fill="#fff"/><rect x="4" y="8" width="1.4" height="1.4" fill="#555"/><rect x="3" y="11" width="1" height="1" fill="#fff"/><rect x="2" y="10" width="1.4" height="1.4" fill="#555"/><rect x="1" y="13" width="1" height="1" fill="#fff"/><rect x="0" y="12" width="1.4" height="1.4" fill="#555"/><rect x="5" y="13" width="1" height="1" fill="#fff"/><rect x="4" y="12" width="1.4" height="1.4" fill="#555"/><rect x="3" y="15" width="1" height="1" fill="#fff"/><rect x="2" y="14" width="1.4" height="1.4" fill="#555"/><rect x="1" y="17" width="1" height="1" fill="#fff"/><rect x="0" y="16" width="1.4" height="1.4" fill="#555"/><rect x="5" y="17" width="1" height="1" fill="#fff"/><rect x="4" y="16" width="1.4" height="1.4" fill="#555"/><rect x="3" y="19" width="1" height="1" fill="#fff"/><rect x="2" y="18" width="1.4" height="1.4" fill="#555"/><rect x="1" y="21" width="1" height="1" fill="#fff"/><rect x="0" y="20" width="1.4" height="1.4" fill="#555"/><rect x="5" y="21" width="1" height="1" fill="#fff"/><rect x="4" y="20" width="1.4" height="1.4" fill="#555"/></svg><div class="a" style="left:213px;top:85px;width:29px;height:29px;background:#fbfbfb;border:1px solid #7a7a7a"></div><svg class="a" style="left:219px;top:91px" width="16" height="16" viewBox="0 0 16 16"><rect x="1" y="1" width="14" height="10.5" fill="#fff" stroke="#1060c0" stroke-width="2"/><path d="M8,12 V13.5 M3.5,15 H12.5" stroke="#1060c0" stroke-width="2"/></svg><div class="a" style="left:246px;top:85px;width:29px;height:29px;background:#fbfbfb;border:1px solid #7a7a7a"></div><svg class="a" style="left:252px;top:91px" width="17" height="17" viewBox="0 0 17 17"><rect x="1" y="1" width="14" height="10.5" fill="#fff" stroke="#1060c0" stroke-width="2"/><text x="2.6" y="15.9" font-family="Liberation Sans" font-weight="bold" font-size="11.5" fill="#f8c000" stroke="#111" stroke-width="1.6" paint-order="stroke" letter-spacing="-0.5">24</text></svg><div class="a" style="left:282px;top:87px;width:1px;height:25px;background:#a0a0a0"></div><svg class="a" style="left:295px;top:91px" width="16" height="16" viewBox="0 0 16 16"><rect x="1" y="1" width="14" height="12" fill="#fff" stroke="#1060c0" stroke-width="2"/><rect x="0.5" y="8.5" width="7" height="6" fill="#fff" stroke="#444"/><path d="M15,11 H8.5 M11,8.5 L8.5,11 L11,13.5" stroke="#1060c0" stroke-width="1.8" fill="none"/></svg><div class="a" style="left:325px;top:87px;width:1px;height:25px;background:#a0a0a0"></div><svg class="a" style="left:338px;top:91px" width="16" height="16" viewBox="0 0 16 16"><rect x="1" y="1" width="14" height="10" fill="#fff" stroke="#1060c0" stroke-width="2"/><path d="M6,14.5 H10" stroke="#1060c0" stroke-width="1.8"/><circle cx="11.5" cy="11.5" r="4.5" fill="#d82a1a"/><path d="M9.5,9.5 L13.5,13.5 M13.5,9.5 L9.5,13.5" stroke="#fff" stroke-width="1.5"/></svg><svg class="a" style="left:371px;top:91px" width="16" height="16" viewBox="0 0 16 16"><rect x="1" y="1" width="14" height="10" fill="#fff" stroke="#1060c0" stroke-width="2"/><rect x="0.5" y="8.5" width="7" height="6" fill="#fff" stroke="#444"/><circle cx="11.5" cy="11.5" r="4.5" fill="#d82a1a"/><path d="M9.5,9.5 L13.5,13.5 M13.5,9.5 L9.5,13.5" stroke="#fff" stroke-width="1.5"/></svg><div class="a" style="left:401px;top:87px;width:1px;height:25px;background:#a0a0a0"></div><svg class="a" style="left:413px;top:91px" width="16" height="16" viewBox="0 0 16 16"><rect x="1" y="1" width="14" height="10" fill="#fff" stroke="#1060c0" stroke-width="2"/><path d="M4,14.5 H8" stroke="#1060c0" stroke-width="1.8"/><circle cx="11.5" cy="11.5" r="4.8" fill="#f8c020" stroke="#333" stroke-width="0.6"/><path d="M10.85,10.37 L9.40,7.86 A4.2,4.2 0 0 1 13.60,7.86 L12.15,10.37 Z M12.80,11.50 L15.70,11.50 A4.2,4.2 0 0 1 13.60,15.14 L12.15,12.63 Z M10.85,12.63 L9.40,15.14 A4.2,4.2 0 0 1 7.30,11.50 L10.20,11.50 Z" fill="#1a1a1a"/><circle cx="11.5" cy="11.5" r="0.9" fill="#1a1a1a"/></svg><svg class="a" style="left:447px;top:91px" width="16" height="16" viewBox="0 0 16 16"><rect x="1" y="1" width="14" height="10" fill="#fff" stroke="#1060c0" stroke-width="2"/><path d="M4,14.5 H8" stroke="#1060c0" stroke-width="1.8"/><path d="M11.5,8 V2 M8.5,4.5 L11.5,1 L14.5,4.5" stroke="#222" stroke-width="2" fill="none"/><circle cx="11.5" cy="11.5" r="4.8" fill="#f8c020" stroke="#333" stroke-width="0.6"/><path d="M10.85,10.37 L9.40,7.86 A4.2,4.2 0 0 1 13.60,7.86 L12.15,10.37 Z M12.80,11.50 L15.70,11.50 A4.2,4.2 0 0 1 13.60,15.14 L12.15,12.63 Z M10.85,12.63 L9.40,15.14 A4.2,4.2 0 0 1 7.30,11.50 L10.20,11.50 Z" fill="#1a1a1a"/><circle cx="11.5" cy="11.5" r="0.9" fill="#1a1a1a"/></svg></body></html>
